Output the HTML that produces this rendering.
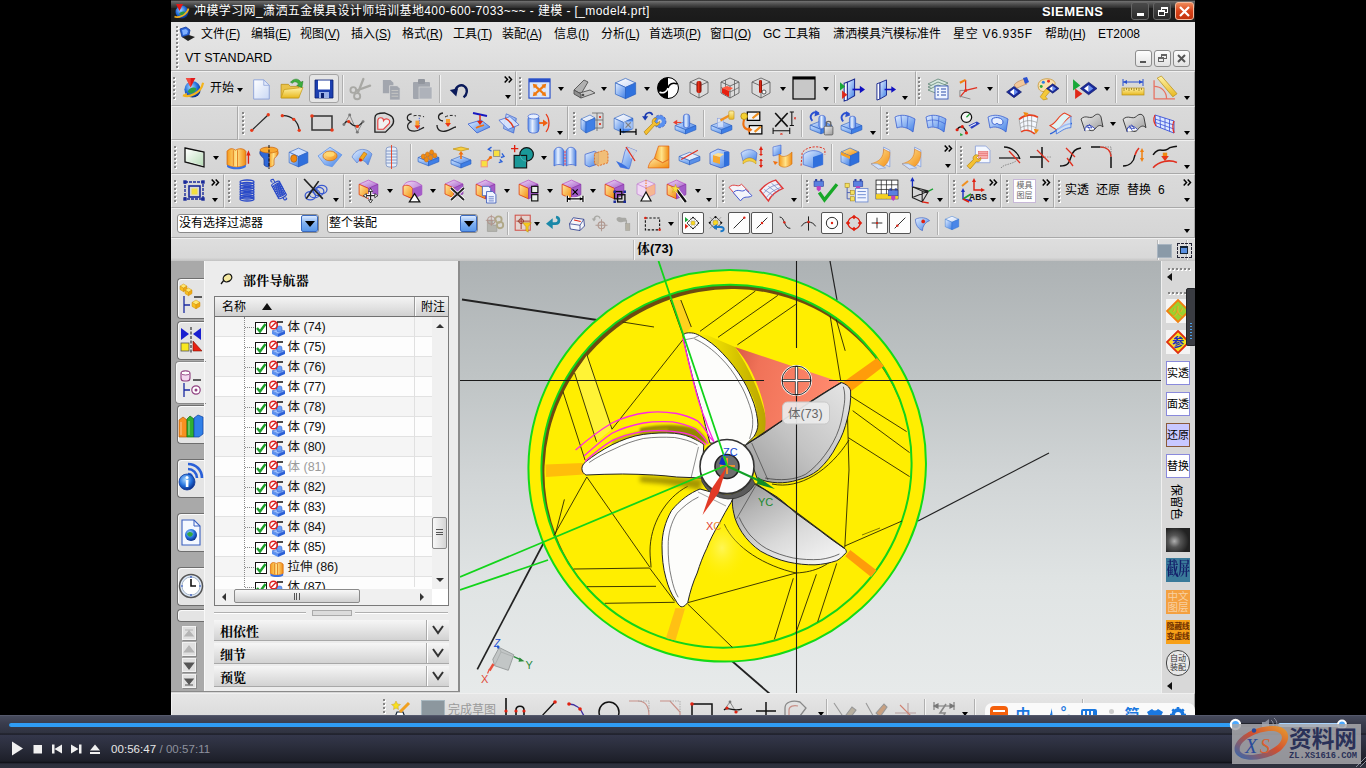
<!DOCTYPE html>
<html lang="zh"><head><meta charset="utf-8"><title>NX</title>
<style>
*{box-sizing:border-box;margin:0;padding:0}
html,body{width:1366px;height:768px;overflow:hidden;background:#000}
body{position:relative;font-family:"Liberation Sans","Noto Sans CJK SC",sans-serif;font-size:13px;color:#000}
.abs{position:absolute}
#win{position:absolute;left:171px;top:0;width:1024px;height:716px;background:#d7d7d7;overflow:hidden}
#title{position:absolute;left:0;top:0;width:1024px;height:22px;background:linear-gradient(#1c1c1c 0,#6c6c6c 1.500px,#505050 4px,#303030 7.500px,#1e1e1e 8.500px,#1a1a1a 100%);color:#fff;font-size:14px;line-height:23px;white-space:nowrap}
#menu{position:absolute;left:0;top:22px;width:1024px;height:49px;background:linear-gradient(#e6e6e6,#e2e2e2 50%,#dcdcdc);border-bottom:1px solid #ababab;font-size:13px}
.tb{position:absolute;background:#d8d8d8;border-top:1px solid #f0f0f0;border-left:1px solid #f0f0f0;border-bottom:1px solid #a9a9a9;border-right:1px solid #a9a9a9}
svg{position:absolute;overflow:visible}
.wb{top:2px;width:18px;height:18px;border:1px solid #666;border-radius:3px;background:linear-gradient(#4a4a4a,#2a2a2a)}
#title span{font-size:12px}
.mi{position:absolute;top:4px;white-space:nowrap;font-size:12px;line-height:16px;color:#000}
.mi u{text-decoration:underline;text-underline-offset:1px}
.cb{position:absolute;top:28px;width:17px;height:17px;border:1px solid #8c8c8c;border-radius:3px;background:linear-gradient(#fdfdfd,#e2e2e2)}
.grip{position:absolute;width:3px}
.grip:before{content:"";position:absolute;left:1px;top:1px;width:2px;height:100%;background:repeating-linear-gradient(#fff 0 2px,rgba(0,0,0,0) 2px 4px)}
.grip:after{content:"";position:absolute;left:0;top:0;width:2px;height:100%;background:repeating-linear-gradient(#858585 0 2px,rgba(0,0,0,0) 2px 4px)}
.tb{background:linear-gradient(#dadada,#d5d5d5)}
.dd{position:absolute;width:0;height:0;border-left:3.5px solid transparent;border-right:3.5px solid transparent;border-top:4px solid #000}
.sep{position:absolute;width:2px;border-left:1px solid #b0b0b0;border-right:1px solid #f4f4f4}
.more{position:absolute;font-size:13px;font-weight:bold;line-height:12px;color:#000}
.tbt{position:absolute;font-size:12px;line-height:18px;white-space:nowrap}
.pressed{position:absolute;border:1px solid #a4a4a4;border-radius:3px;background:#e5e5e5}
.mjtc{position:absolute;width:23px;height:24px;background:#fff;border:1px solid #c8b8d8;font-size:8px;line-height:10px;color:#666;text-align:center;padding-top:1px}
.mjtc span{display:block}
.combo{position:absolute;height:19px;border:1px solid #8a8a8a;border-radius:3px;background:#fff;font-size:12px;line-height:17px;overflow:hidden;white-space:nowrap}
.combo span{position:absolute;left:1px;top:0}
.combo b{position:absolute;right:0;top:0;width:17px;height:17px;background:linear-gradient(#dceaff,#7fb0f0 50%,#5a98ea);border:1px solid #3a6ac0;border-radius:2px}
.combo b i{position:absolute;left:2.5px;top:5px;border-left:5px solid transparent;border-right:5px solid transparent;border-top:6px solid #000}
.fr{position:absolute;border:1px solid #555;border-radius:2px;background:#fdfdfd}
#status{position:absolute;left:0;top:238px;width:1024px;height:23px;background:linear-gradient(#dedede,#d8d8d8 85%,#c2c2c2);border-top:1px solid #f0f0f0;font-size:13px;font-weight:bold;font-family:"Liberation Sans","Noto Serif CJK SC",serif}
#status span{position:absolute;top:0;line-height:19px}
.sdiv{position:absolute;top:1px;height:20px;width:2px;border-left:1px solid #b8b8b8;border-right:1px solid #f4f4f4}
.sicon1{position:absolute;left:986px;top:5px;width:15px;height:14px;background:#8a9aa8;border:1px solid #a8b4c0}
.sicon2{position:absolute;left:1006px;top:4px;width:15px;height:15px;border:1.5px dashed #223}
.sicon2 i{position:absolute;left:2px;top:2px;width:8px;height:8px;background:#5a90e0;border:1px solid #123;border-top-width:2px}
#panel{position:absolute;left:0;top:261px;width:289px;height:431px;background:#ececec;border-right:2px solid #8c8c8c;border-bottom:1px solid #8a8a8a;overflow:hidden}
#tabs{position:absolute;left:0;top:0;width:33px;height:432px;background:#a9a9a9}
.tab{position:absolute;left:6px;width:28px;background:#e4e4e4;border:1px solid #6e6e6e;border-right:none;border-radius:4px 0 0 4px;box-shadow:inset 1px 1px 0 #fafafa}
.tab.act{left:4px;width:31px;background:#ececec;border-color:#8a8a8a}
.nb{position:absolute;left:11px;width:14px;height:14px;background:#e0e0e0;border:1px solid #f2f2f2;box-shadow:1px 1px 0 #8a8a8a}
#pbody{position:absolute;left:33px;top:0;width:254px;height:432px;border-left:1px solid #f8f8f8}
#ptitle{position:absolute;left:38px;top:11px;font-size:13px;font-weight:bold;line-height:18px;letter-spacing:.2px;font-family:"Liberation Sans","Noto Serif CJK SC",serif}
#tree{position:absolute;left:9px;top:35px;width:235px;height:310px;border:1px solid #7a7a7a;background:#fff;overflow:hidden}
#thead{position:absolute;left:0;top:0;width:233px;height:20px;background:linear-gradient(#f4f4f4,#e0e0e0 60%,#d0d0d0);border-bottom:1px solid #707070;font-size:12px;line-height:20px}
#thead span{position:absolute;top:0}
.up{position:absolute;left:47px;top:6px;border-left:5.5px solid transparent;border-right:5.5px solid transparent;border-bottom:7px solid #111}
.cdiv{position:absolute;left:199px;top:0;height:19px;width:2px;border-left:1px solid #9a9a9a;border-right:1px solid #fafafa}
.row{position:absolute;left:0;width:217px;height:20px;border-bottom:1px solid #e2e2e2;background:#fdfdfd;font-size:12.5px;line-height:19px}
.row.alt{background:#f5f5f5}
.row span{position:absolute;left:72.500px;top:1px;white-space:nowrap;color:#111}
.row.dim span{color:#9a9a9a}
.ck{position:absolute;left:39.500px;top:4.500px;width:12px;height:12px;border:1.3px solid #111;background:#fff}
.dots{position:absolute;left:30px;top:10px;width:9px;border-top:1px dotted #888}
.vdots{position:absolute;left:29px;top:20px;height:270px;border-left:1px dotted #888}
.cdiv2{position:absolute;left:199px;top:20px;height:270px;border-left:1px solid #e0e0e0}
#vsb{position:absolute;left:217px;top:20px;width:16px;height:272px;background:#f0f0f0}
#hsb{position:absolute;left:0;top:292px;width:217px;height:16px;background:#f0f0f0}
.sa{position:absolute;left:4px;width:0;height:0;border-left:4px solid transparent;border-right:4px solid transparent}
.sh{position:absolute;top:4px;width:0;height:0;border-top:4px solid transparent;border-bottom:4px solid transparent}
.thumb{position:absolute;border:1px solid #8a8a8a;border-radius:2px;background:linear-gradient(90deg,#f8f8f8,#d4d4d4)}
#hsb .thumb{background:linear-gradient(#f8f8f8,#d0d0d0)}
.gr{position:absolute;left:3px;top:11px;width:7px;height:7px;background:repeating-linear-gradient(#555 0 1px,transparent 1px 2.500px)}
.gr2{position:absolute;left:59px;top:3px;width:7px;height:7px;background:repeating-linear-gradient(90deg,#555 0 1px,transparent 1px 2.500px)}
#split{position:absolute;left:9px;top:349px;width:235px;height:6px}
#split i{position:absolute;top:2px;height:2px;border-top:1px solid #b0b0b0;border-bottom:1px solid #fff}
#split b{position:absolute;left:98px;top:0;width:40px;height:6px;border:1px solid #aaa;background:#dcdcdc}
.sec{font-family:"Liberation Sans","Noto Serif CJK SC",serif;position:absolute;left:9px;width:235px;height:21px;background:linear-gradient(#f6f6f6,#e4e4e4 50%,#d2d2d2);border-bottom:1px solid #a8a8a8;font-size:13px;font-weight:bold;line-height:21px}
.sec span{position:absolute;left:6px;top:1px}
.sec b{position:absolute;right:0;top:0;width:23px;height:20px;border-left:1px solid #aaa;box-shadow:inset 1px 0 0 #fff}
#vp{position:absolute;left:289px;top:261px;width:701px;height:432px;background:linear-gradient(#adb2b4 0,#bfc4c5 27%,#d1d5d6 50%,#e0e4e4 75%,#e7eaea 100%);overflow:hidden}
#rbar{position:absolute;left:990px;top:261px;width:34px;height:432px;background:#d8d8d8;border-left:1px solid #f0f0f0}
.hgrip{position:absolute;left:6px;width:23px;height:3px}
.hgrip:before{content:"";position:absolute;left:1px;top:1px;height:2px;width:100%;background:repeating-linear-gradient(90deg,#fff 0 2px,rgba(0,0,0,0) 2px 4px)}
.hgrip:after{content:"";position:absolute;left:0;top:0;height:2px;width:100%;background:repeating-linear-gradient(90deg,#858585 0 2px,rgba(0,0,0,0) 2px 4px)}
.la{position:absolute;left:5px;width:0;height:0;border-top:4px solid transparent;border-bottom:4px solid transparent;border-right:5px solid #111}
.rb{position:absolute;left:4px;width:24px;height:24px;border:1px solid #8a8adc;background:#fff;font-size:11px;line-height:22px;white-space:nowrap;overflow:hidden;text-align:center}
.rb span{position:absolute;left:0;top:0;width:100%;text-align:center}
.vtxt{position:absolute;left:-5px;top:234px;width:38px;height:14px;font-size:12px;line-height:14px;transform:rotate(90deg);transform-origin:50% 50%;text-align:center;white-space:nowrap}
#volw{position:absolute;left:24px;top:27px;width:10px;height:58px;background:#3a3c42;border:1px solid #24262a;border-radius:2px}
#volw i{position:absolute;left:3px;top:34px;width:2px;height:18px;background:repeating-linear-gradient(#4aa0f0 0 1.500px,transparent 1.500px 3px)}
#bbar{position:absolute;left:0;top:693px;width:1024px;height:23px;overflow:hidden;background:#e0e0e0}
#bbar .tb{background:linear-gradient(#e6e6e6,#dcdcdc)}
#ime{position:absolute;left:813.500px;top:6.500px;width:210px;height:24px;background:#fafafa;border-radius:7px;overflow:hidden}
#player{position:absolute;left:0;top:715px;width:1366px;height:53px;background:linear-gradient(#5c6074 0,#464a5c 1.500px,#3a3d4e 8px,#2f3240 18px,#191a22 19px,#33364a 20.500px,#2c2f3e 30px,#1d1f29 46px,#12131a 47.500px,#2c2f3c 49px,#30333f 53px)}
#ptrack{position:absolute;left:9px;top:7.500px;width:1340px;height:4px;border-radius:2px;background:#20222c}
#pfill{position:absolute;left:0;top:0;width:1226px;height:4px;border-radius:2px;background:#2f9cf4}
#vfill{position:absolute;left:1269px;top:0;width:64px;height:4px;border-radius:2px;background:#a8d4ff}
#ptime{position:absolute;left:111px;top:27px;font-size:11.500px;line-height:14px;color:#e6e6e6;letter-spacing:.05px;white-space:nowrap}
#ptime i{font-style:normal;color:#8e929e}
#wm{position:absolute;left:1232px;top:9px;width:129px;height:40px;background:rgba(168,168,172,.86)}

</style></head>
<body>
<!-- titlebar -->
<div id="win">
<div id="title">
  <svg style="left:2px;top:2px" width="17" height="18" viewBox="0 0 17 18">
    <defs><radialGradient id="gl" cx="40%" cy="35%" r="65%"><stop offset="0" stop-color="#9fd0ff"/><stop offset=".6" stop-color="#1f6ad8"/><stop offset="1" stop-color="#0b2f8a"/></radialGradient></defs>
    <circle cx="9" cy="10" r="6.5" fill="url(#gl)"/>
    <path d="M1.5 14.5 C5 16.5 14 13 15.5 6.5" fill="none" stroke="#f0b020" stroke-width="1.8"/>
    <path d="M3 2 L10 2 L6.5 9 Z" fill="#e01818"/>
    <path d="M6 12 C7 10 10 9 12 10 C11 13 8 14 6 12Z" fill="#2c9a3a"/>
  </svg>
  <span class="abs" style="left:23px;top:0;letter-spacing:.4px">冲模学习网_潇洒五金模具设计师培训基地400-600-7033~~~ - 建模 - [_model4.prt]</span>
  <span class="abs" style="left:871px;top:0;font-weight:bold;font-size:13px;letter-spacing:.4px;line-height:23px">SIEMENS</span>
  <div class="abs wb" style="left:960px"><i style="position:absolute;left:5px;top:10px;width:7px;height:3px;background:#fff"></i></div>
  <div class="abs wb" style="left:982px"><i style="position:absolute;left:7px;top:4px;width:7px;height:6px;border:1.5px solid #fff;border-top-width:2px"></i><i style="position:absolute;left:4px;top:7px;width:7px;height:6px;border:1.5px solid #fff;border-top-width:2px;background:#333"></i></div>
  <div class="abs wb" style="left:1004px;width:19px;background:linear-gradient(#f08a5a,#d8431a 50%,#c2330e);border-color:#f5b99c">
    <svg style="left:3px;top:3px" width="11" height="11" viewBox="0 0 11 11"><path d="M1 1L10 10M10 1L1 10" stroke="#fff" stroke-width="2.2"/></svg></div>
</div>

<!-- menubar -->
<div id="menu">
  <div class="grip" style="left:5px;top:4px;height:42px"></div>
  <svg style="left:8px;top:4px" width="17" height="17" viewBox="0 0 17 17">
    <path d="M1 3 L7 1 L11 4 L10 9 L3 11 Z" fill="#2a63d6" stroke="#123a9a" stroke-width=".8"/>
    <path d="M3 11 L10 9 L16 11 L9 15 Z" fill="#222"/>
    <path d="M3 4 L7 3 L9 5 L8 8 L4 9Z" fill="#7fb0ff"/>
  </svg>
  <span class="mi" style="left:30px">文件(<u>F</u>)</span>
  <span class="mi" style="left:80px">编辑(<u>E</u>)</span>
  <span class="mi" style="left:129px">视图(<u>V</u>)</span>
  <span class="mi" style="left:180px">插入(<u>S</u>)</span>
  <span class="mi" style="left:231px">格式(<u>R</u>)</span>
  <span class="mi" style="left:282px">工具(<u>T</u>)</span>
  <span class="mi" style="left:331px">装配(<u>A</u>)</span>
  <span class="mi" style="left:383px">信息(<u>I</u>)</span>
  <span class="mi" style="left:430px">分析(<u>L</u>)</span>
  <span class="mi" style="left:478px">首选项(<u>P</u>)</span>
  <span class="mi" style="left:539px">窗口(<u>O</u>)</span>
  <span class="mi" style="left:592px">GC 工具箱</span>
  <span class="mi" style="left:662px">潇洒模具汽模标准件</span>
  <span class="mi" style="left:782px;letter-spacing:.7px">星空 V6.935F</span>
  <span class="mi" style="left:874px">帮助(<u>H</u>)</span>
  <span class="mi" style="left:927px">ET2008</span>
  <span class="mi" style="left:14px;top:28px;font-size:12.500px">VT STANDARD</span>
  <div class="cb" style="left:964px"><i style="position:absolute;left:4px;top:10px;width:6px;height:2px;background:#555"></i></div>
  <div class="cb" style="left:983px"><i style="position:absolute;left:6px;top:3px;width:6px;height:5px;border:1px solid #666;border-top-width:2px"></i><i style="position:absolute;left:3px;top:6px;width:6px;height:5px;border:1px solid #666;border-top-width:2px;background:#eee"></i></div>
  <div class="cb" style="left:1002px"><svg style="left:3px;top:3px" width="9" height="9" viewBox="0 0 9 9"><path d="M1 1L8 8M8 1L1 8" stroke="#555" stroke-width="2"/></svg></div>
</div>

<!-- toolbars -->
<svg width="0" height="0" style="position:absolute"><defs>
<linearGradient id="gB" x1="0" y1="0" x2="1" y2="1"><stop offset="0" stop-color="#e4efff"/><stop offset="1" stop-color="#3f7fe6"/></linearGradient>
<linearGradient id="gB2" x1="0" y1="0" x2="0" y2="1"><stop offset="0" stop-color="#cfe3ff"/><stop offset="1" stop-color="#5b93ea"/></linearGradient>
<linearGradient id="gO" x1="0" y1="0" x2="1" y2="1"><stop offset="0" stop-color="#ffe9a0"/><stop offset="1" stop-color="#f28a0c"/></linearGradient>
<linearGradient id="gO2" x1="0" y1="0" x2="1" y2="0"><stop offset="0" stop-color="#f59a1a"/><stop offset=".5" stop-color="#ffe38a"/><stop offset="1" stop-color="#f08a10"/></linearGradient>
<linearGradient id="gP" x1="0" y1="0" x2="1" y2="1"><stop offset="0" stop-color="#f3dcf7"/><stop offset="1" stop-color="#a25cc8"/></linearGradient>
<linearGradient id="gY" x1="0" y1="0" x2="0" y2="1"><stop offset="0" stop-color="#fff3a8"/><stop offset="1" stop-color="#e8b820"/></linearGradient>
<linearGradient id="gG" x1="0" y1="0" x2="1" y2="1"><stop offset="0" stop-color="#f2f2f2"/><stop offset="1" stop-color="#9a9a9a"/></linearGradient>
<linearGradient id="gW" x1="0" y1="0" x2="1" y2="1"><stop offset="0" stop-color="#ffffff"/><stop offset="1" stop-color="#c9d8f5"/></linearGradient>
<radialGradient id="gGl" cx="40%" cy="35%" r="65%"><stop offset="0" stop-color="#a8d8ff"/><stop offset=".6" stop-color="#2370dc"/><stop offset="1" stop-color="#0b2f8a"/></radialGradient>
<linearGradient id="gCy" x1="0" y1="0" x2="1" y2="0"><stop offset="0" stop-color="#5a8fe8"/><stop offset=".4" stop-color="#e8f1ff"/><stop offset="1" stop-color="#4a80df"/></linearGradient>
<linearGradient id="gGr" x1="0" y1="0" x2="1" y2="1"><stop offset="0" stop-color="#ffffff"/><stop offset="1" stop-color="#b8dcb8"/></linearGradient>
<linearGradient id="gR" x1="0" y1="0" x2="1" y2="0"><stop offset="0" stop-color="#8a0a00"/><stop offset=".4" stop-color="#e83018"/><stop offset="1" stop-color="#7a0800"/></linearGradient>
</defs></svg>
<div class="tb" style="left:0px;top:71px;width:345px;height:35px"></div>
<div class="tb" style="left:345px;top:71px;width:400px;height:35px"></div>
<div class="tb" style="left:745px;top:71px;width:279px;height:35px"></div>
<i class="grip" style="left:1.5px;top:77px;height:24px"></i>
<svg style="left:11.0px;top:76.5px" width="23.0" height="23.0" viewBox="0 0 24 24"><circle cx="11" cy="13" r="8.5" fill="url(#gGl)"/><path d="M6 15C8 11 12 10 15 12C14 17 9 19 6 15Z" fill="#2fa040"/><path d="M1 19C7 22 20 17 22 6" fill="none" stroke="#f4b41c" stroke-width="2.2"/><path d="M1 19l4 -2.5l0 4z" fill="#f4b41c"/><path d="M4 1L14 1L9 11Z" fill="#e21a1a"/><path d="M4 1L9 1L9 11Z" fill="#ff6a5a" opacity=".6"/></svg>
<span class="tbt" style="left:39px;top:79px">开始</span>
<i class="dd" style="left:66.0px;top:87.5px"></i>
<svg style="left:79.0px;top:78.0px" width="22.0" height="22.0" viewBox="0 0 24 24"><path d="M4 2L15 2L21 8L21 23L4 23Z" fill="url(#gW)" stroke="#8aa0d8" stroke-width="1"/><path d="M15 2L15 8L21 8Z" fill="#dfe8fb" stroke="#8aa0d8" stroke-width=".8"/></svg>
<svg style="left:108.0px;top:75.5px" width="25.0" height="25.0" viewBox="0 0 24 24"><path d="M2 8L9 8L11 10L19 10L19 21L2 21Z" fill="#e9c24a" stroke="#b88a10" stroke-width=".7"/><path d="M5 13L23 11L19 21L2 21Z" fill="url(#gY)" stroke="#c49a18" stroke-width=".7"/><path d="M11 6C14 2 19 2 21 6L23 5L22 11L17 9L19 8C17 5 14 5 13 7Z" fill="#3cae3c" stroke="#1e7a1e" stroke-width=".5"/></svg>
<div class="pressed" style="left:138px;top:74px;width:30px;height:29px"></div>
<svg style="left:141.0px;top:77.0px" width="24.0" height="24.0" viewBox="0 0 24 24"><path d="M3 3L21 3L21 21L3 21Z" fill="#1c3fb0" stroke="#0a1f70" stroke-width=".8"/><rect x="6" y="3.5" width="12" height="9" fill="#fff"/><rect x="7" y="15" width="10" height="6" fill="#9ab0e8"/><rect x="9" y="16" width="3" height="5" fill="#0a1f70"/></svg>
<i class="sep" style="left:171.0px;top:75px;height:28px"></i>
<svg style="left:178.0px;top:77.5px" width="23.0" height="23.0" viewBox="0 0 24 24"><path d="M15 1L9.500 15M22 8L8 13" stroke="#a8a8a4" stroke-width="2.400" fill="none" stroke-linecap="round"/><circle cx="8.500" cy="19" r="3.200" fill="none" stroke="#a8a8a4" stroke-width="2"/><circle cx="4.500" cy="12.500" r="3" fill="none" stroke="#a8a8a4" stroke-width="2"/></svg>
<svg style="left:209.0px;top:77.5px" width="23.0" height="23.0" viewBox="0 0 24 24"><path d="M3 2L11 2L14 5L14 16L3 16Z" fill="#a2a6ae"/><path d="M10 8L18 8L21 11L21 23L10 23Z" fill="#a2a6ae" stroke="#dcdcdc" stroke-width=".8"/><path d="M12 13h7M12 16h7M12 19h7" stroke="#c8c8c4" stroke-width="1"/></svg>
<svg style="left:239.0px;top:77.0px" width="24.0" height="24.0" viewBox="0 0 24 24"><rect x="3" y="5" width="17" height="17" rx="1" fill="#a2a6ae"/><rect x="8" y="2" width="7" height="5" rx="1" fill="#92969e"/><rect x="9" y="10" width="13" height="12" fill="#aeb2ba" stroke="#dcdcdc" stroke-width=".6"/></svg>
<i class="sep" style="left:268.0px;top:75px;height:28px"></i>
<svg style="left:277.0px;top:79.0px" width="22.0" height="22.0" viewBox="0 0 24 24"><path d="M8 14C8 8 14 5 18 8C22 11 21 17 17 20" fill="none" stroke="#0a1a5a" stroke-width="2.6"/><path d="M2 12L11 10L9 19Z" fill="#0a1a5a"/></svg>
<svg style="left:332.5px;top:76px" width="9" height="7" viewBox="0 0 9 7"><path d="M.7 .5L3.500 3.500L.7 6.500M4.700 .5L7.500 3.500L4.700 6.500" fill="none" stroke="#000" stroke-width="1.500"/></svg>
<i class="dd" style="left:334.0px;top:94.5px"></i>
<i class="grip" style="left:347.5px;top:77px;height:24px"></i>
<svg style="left:357.0px;top:76.5px" width="23.0" height="23.0" viewBox="0 0 24 24"><rect x="1" y="2" width="22" height="20" fill="#dbe7fb" stroke="#2a50c8" stroke-width="1.2"/><rect x="1" y="2" width="22" height="3.5" fill="#2a50c8"/><path d="M7 9L17 18M17 9L7 18" stroke="#f07a10" stroke-width="2.4"/><path d="M5 7l5 1l-4 4zM19 7l-5 1l4 4zM5 20l5 -1l-4 -4zM19 20l-5 -1l4 -4z" fill="#f07a10"/></svg>
<i class="dd" style="left:387.0px;top:86.5px"></i>
<svg style="left:401.0px;top:76.0px" width="24.0" height="24.0" viewBox="0 0 24 24"><path d="M2 14L12 4L16 6L9 18Z" fill="#b0b0b0" stroke="#505050" stroke-width=".9"/><path d="M4 18L18 14L23 17L9 22Z" fill="#c8c8c8" stroke="#505050" stroke-width=".9"/><path d="M2 14L9 18L9 22L2 18Z" fill="#909090" stroke="#505050" stroke-width=".9"/><circle cx="11" cy="19" r="1.3" fill="#505050"/></svg>
<i class="dd" style="left:430.0px;top:86.5px"></i>
<svg style="left:441.0px;top:74.5px" width="27.0" height="27.0" viewBox="0 0 24 24"><path d="M12 3L21 7L12 11L3 7Z" fill="url(#gW)" stroke="#2a5fc0" stroke-width="0.6"/><path d="M3 7L12 11L12 21L3 17Z" fill="url(#gB)" stroke="#2a5fc0" stroke-width="0.6"/><path d="M12 11L21 7L21 17L12 21Z" fill="#2f72de" stroke="#2a5fc0" stroke-width="0.6"/></svg>
<i class="dd" style="left:473.0px;top:86.5px"></i>
<svg style="left:485.0px;top:76.0px" width="24.0" height="24.0" viewBox="0 0 24 24"><circle cx="12" cy="12" r="10.500" fill="#000"/><path d="M12 1.500A10.500 10.500 0 0 1 12 22.500Z" fill="#fff"/><path d="M3.500 16C7 18 11 16 12 12" fill="none" stroke="#fff" stroke-width="1.500"/><path d="M12 12C13 8 17 6 21 8" fill="none" stroke="#000" stroke-width="1.500"/><circle cx="12" cy="12" r="10.500" fill="none" stroke="#000" stroke-width="1"/></svg>
<svg style="left:516.0px;top:76.0px" width="24.0" height="24.0" viewBox="0 0 24 24"><path d="M12 2L21 6L21 17L12 22L3 17L3 6ZM3 6L12 10L21 6M12 10L12 22" fill="#e0e0e0" fill-opacity=".5" stroke="#555" stroke-width=".8"/><rect x="9.5" y="5" width="5" height="12" rx="2" fill="url(#gR)"/></svg>
<svg style="left:547.0px;top:76.0px" width="24.0" height="24.0" viewBox="0 0 24 24"><path d="M12 2L21 6L21 17L12 22L3 17L3 6ZM3 6L12 10L21 6M12 10L12 22" fill="#e0e0e0" fill-opacity=".5" stroke="#555" stroke-width=".8"/><path d="M3 11.5L12 16L21 11.5M7.5 4L7.5 19.5M16.5 4L16.5 19.5" stroke="#555" stroke-width=".7" fill="none"/><path d="M4 12L11 15L11 21L4 17Z" fill="#e82010"/><path d="M4 12L9 10L15 12L11 15Z" fill="#ff5a40"/></svg>
<svg style="left:578.0px;top:76.0px" width="24.0" height="24.0" viewBox="0 0 24 24"><path d="M12 2L21 6L21 17L12 22L3 17L3 6ZM3 6L12 10L21 6M12 10L12 22" fill="#e0e0e0" fill-opacity=".5" stroke="#555" stroke-width=".8"/><rect x="10" y="4" width="3" height="13" rx="1.2" fill="url(#gR)"/><circle cx="15" cy="16" r="2" fill="#fff" stroke="#333" stroke-width=".8"/></svg>
<i class="dd" style="left:609.0px;top:86.5px"></i>
<svg style="left:621.0px;top:76.0px" width="24.0" height="24.0" viewBox="0 0 24 24"><rect x="1" y="1" width="22" height="22" fill="#c8c8c8" stroke="#000" stroke-width="1.2"/><rect x="1" y="1" width="22" height="2.5" fill="#000"/></svg>
<i class="dd" style="left:652.0px;top:86.5px"></i>
<i class="sep" style="left:663.0px;top:75px;height:28px"></i>
<svg style="left:669.0px;top:76.5px" width="25.0" height="25.0" viewBox="0 0 24 24"><path d="M7 5L14 2L14 18L7 22Z" fill="url(#gB)" stroke="#1a2a90" stroke-width="1"/><path d="M4 6L7 5L7 22L4 23Z" fill="#fff" stroke="#1a2a90" stroke-width="1"/><path d="M12 12L20 12" stroke="#1010c0" stroke-width="1.6"/><path d="M19 8.5L24 12L19 15.5Z" fill="#1010c0"/><path d="M0 5L5 9L0 13Z" fill="#18a838"/><path d="M2 13L7 17L2 21Z" fill="#e02818"/></svg>
<svg style="left:704.0px;top:77.5px" width="23.0" height="23.0" viewBox="0 0 24 24"><path d="M5 5L12 2L12 18L5 22Z" fill="url(#gB)" stroke="#1a2a90" stroke-width="1"/><path d="M2 6L5 5L5 22L2 23Z" fill="#fff" stroke="#1a2a90" stroke-width="1"/><path d="M10 12L18 12" stroke="#1010c0" stroke-width="1.6"/><path d="M17 8.5L22 12L17 15.5Z" fill="#1010c0"/></svg>
<i class="dd" style="left:731.0px;top:95.5px"></i>
<i class="grip" style="left:746.5px;top:77px;height:24px"></i>
<svg style="left:755.0px;top:76.0px" width="24.0" height="24.0" viewBox="0 0 24 24"><path d="M2 8L12 3L22 7L12 12Z" fill="#d8e8e0" stroke="#507868" stroke-width=".7"/><path d="M2 11L12 6L22 10L12 15Z" fill="#d8e8e0" stroke="#507868" stroke-width=".7"/><path d="M2 14L12 9L22 13L12 18Z" fill="#d8e8e0" stroke="#507868" stroke-width=".7"/><rect x="9" y="10" width="13" height="13" fill="#eef4ff" stroke="#3a5ab8" stroke-width=".9"/><path d="M11 13h2M15 13h5M11 16h2M15 16h5M11 19h2M15 19h5" stroke="#2a4aa8" stroke-width="1.2"/></svg>
<svg style="left:786.0px;top:76.5px" width="23.0" height="23.0" viewBox="0 0 24 24"><path d="M9 14L9 3M9 14L21 11M9 14L3 21" stroke="#e03020" stroke-width="1.3" fill="none"/><path d="M9 14L3 14L3 20M3 20L14 23" stroke="#888" stroke-width="1" fill="none"/><path d="M3 6L9 3" stroke="#f08010" stroke-width="2.2"/><circle cx="9" cy="14" r="1.6" fill="#e03020"/></svg>
<i class="dd" style="left:816.0px;top:86.5px"></i>
<i class="sep" style="left:826.0px;top:75px;height:28px"></i>
<svg style="left:834.0px;top:76.0px" width="24.0" height="24.0" viewBox="0 0 24 24"><path d="M1.5 16L9 10.375L16.5 16L9 21.625Z" fill="#1a2a9a" stroke="#0a1460" stroke-width=".6"/><path d="M4.875 16L9 12.85L9 19.15Z" fill="#fff"/><path d="M13.125 16L9 12.85L9 19.15Z" fill="#6a90f0"/><path d="M9 9C12 5 17 4 20 3L22 8C18 9 15 11 12 12Z" fill="#f2c89a" stroke="#b88050" stroke-width=".6"/><path d="M18 2L22 1L24 6L20 8Z" fill="#2a50d0"/></svg>
<svg style="left:864.0px;top:75.5px" width="25.0" height="25.0" viewBox="0 0 24 24"><path d="M3 9C3 3 12 1 17 4C22 7 18 11 14 11C11 11 12 15 9 15C5 15 3 13 3 9Z" fill="#f8e0b0" stroke="#c89838" stroke-width=".8"/><circle cx="8" cy="6" r="1.5" fill="#2a80e8"/><circle cx="13" cy="5" r="1.4" fill="#e83020"/><circle cx="6" cy="10" r="1.4" fill="#30a838"/><path d="M10 13L14 11L15 14L10 20L12 22L8 23L5 20Z" fill="#f4c838" stroke="#b88a10" stroke-width=".6"/><path d="M11 12L17 7.5L23 12L17 16.5Z" fill="#1a2a9a" stroke="#0a1460" stroke-width=".6"/><path d="M13.7 12L17 9.48L17 14.52Z" fill="#fff"/><path d="M20.3 12L17 9.48L17 14.52Z" fill="#6a90f0"/></svg>
<i class="sep" style="left:895.0px;top:75px;height:28px"></i>
<svg style="left:901.0px;top:75.5px" width="25.0" height="25.0" viewBox="0 0 24 24"><path d="M1 3L8 9L1 14Z" fill="#18a838"/><path d="M3 12L10 17L3 22Z" fill="#e02818"/><path d="M8 12L16 6.0L24 12L16 18.0Z" fill="#1a2a9a" stroke="#0a1460" stroke-width=".6"/><path d="M11.6 12L16 8.64L16 15.36Z" fill="#fff"/><path d="M20.4 12L16 8.64L16 15.36Z" fill="#6a90f0"/></svg>
<i class="dd" style="left:933.0px;top:86.5px"></i>
<i class="sep" style="left:944.0px;top:75px;height:28px"></i>
<svg style="left:950.0px;top:76.0px" width="24.0" height="24.0" viewBox="0 0 24 24"><rect x="1" y="12" width="22" height="7" fill="url(#gY)" stroke="#b89018" stroke-width=".7"/><path d="M3 12v3M5.5 12v2M8 12v3M10.5 12v2M13 12v3M15.5 12v2M18 12v3M20.5 12v2" stroke="#8a6a08" stroke-width=".7"/><path d="M2 6H22M2 3V10M22 3V10" stroke="#2a50d0" stroke-width="1"/><path d="M2 6l4 -2v4zM22 6l-4 -2v4z" fill="#2a50d0"/></svg>
<svg style="left:981.0px;top:75.5px" width="25.0" height="25.0" viewBox="0 0 24 24"><path d="M2 4L2 22L22 22" fill="none" stroke="#e87060" stroke-width="1.2"/><path d="M2 10C9 10 14 15 14 22" fill="none" stroke="#e87060" stroke-width="1.2"/><path d="M5 2L9 0L24 17L20 20Z" fill="url(#gY)" stroke="#b89018" stroke-width=".7"/></svg>
<i class="dd" style="left:1013.0px;top:95.5px"></i>
<div class="tb" style="left:0px;top:106px;width:67px;height:34px"></div>
<div class="tb" style="left:67px;top:106px;width:330px;height:34px"></div>
<div class="tb" style="left:397px;top:106px;width:313px;height:34px"></div>
<div class="tb" style="left:710px;top:106px;width:314px;height:34px"></div>
<i class="grip" style="left:70.5px;top:112px;height:23px"></i>
<svg style="left:78.0px;top:112.0px" width="22.0" height="22.0" viewBox="0 0 24 24"><path d="M3 20L21 3" stroke="#222" stroke-width="1.3"/><circle cx="3" cy="20" r="1.8" fill="#e83818"/><circle cx="21" cy="3" r="1.8" fill="#e83818"/></svg>
<svg style="left:109.0px;top:112.0px" width="22.0" height="22.0" viewBox="0 0 24 24"><path d="M2 4C12 3 20 10 21 20" fill="none" stroke="#222" stroke-width="1.3"/><circle cx="2.5" cy="4" r="1.8" fill="#e83818"/><circle cx="15" cy="8" r="1.8" fill="#e83818"/><circle cx="21" cy="20" r="1.8" fill="#e83818"/></svg>
<svg style="left:139.0px;top:111.0px" width="24.0" height="24.0" viewBox="0 0 24 24"><rect x="2" y="5" width="20" height="14" fill="none" stroke="#333" stroke-width="1.5"/><circle cx="2" cy="5" r="1.8" fill="#e83818"/><circle cx="22" cy="19" r="1.8" fill="#e83818"/></svg>
<svg style="left:171.0px;top:111.5px" width="23.0" height="23.0" viewBox="0 0 24 24"><path d="M2 13L8 3L16 21L22 10" fill="none" stroke="#888" stroke-width="1"/><path d="M2 13C6 6 8 12 12 14C17 16 18 14 22 10" fill="none" stroke="#222" stroke-width="1.3"/><circle cx="7" cy="10" r="1.7" fill="#e83818"/><circle cx="16" cy="15" r="1.7" fill="#e83818"/><circle cx="2" cy="13" r="1.5" fill="#777"/><circle cx="22" cy="10" r="1.5" fill="#777"/><circle cx="8" cy="3" r="1.5" fill="#777"/><circle cx="16" cy="21" r="1.5" fill="#777"/></svg>
<svg style="left:202.0px;top:111.5px" width="23.0" height="23.0" viewBox="0 0 24 24"><path d="M2 21L2 6C2 2 6 1 12 1L17 3C22 5 23 11 19 15L13 21Z" fill="none" stroke="#222" stroke-width="1.4"/><path d="M5 18L5 9C5 5 11 5 11 9C13 6 19 7 17 12L11 18Z" fill="#f0f0f0" stroke="#e84040" stroke-width="1.2"/></svg>
<svg style="left:232.0px;top:111.5px" width="23.0" height="23.0" viewBox="0 0 24 24"><path d="M9 2C3 3 3 9 9 10C3 12 3 20 12 20C17 20 19 17 22 16" fill="none" stroke="#222" stroke-width="1.3"/><path d="M11 4C15 3 18 4 22 5" stroke="#222" stroke-width="1" stroke-dasharray="3 2" fill="none"/><path d="M17 6V19" stroke="#3050e0" stroke-width=".9" stroke-dasharray="1.5 1"/><path d="M13 9h4v6h-4z" fill="#f8a030"/><path d="M12 14l3 4l3 -4z" fill="#e83818"/></svg>
<svg style="left:263.0px;top:111.0px" width="24.0" height="24.0" viewBox="0 0 24 24"><path d="M9 2C3 3 3 9 9 10M3 14C3 20 8 21 12 20C17 19 19 16 22 16" fill="none" stroke="#222" stroke-width="1.3"/><path d="M11 6C15 4 18 4 22 5" stroke="#222" stroke-width="1" stroke-dasharray="3 2" fill="none"/><path d="M12 8h4v5h-4z" fill="#f8a030"/><path d="M11 12l3 4l3 -4z" fill="#e83818"/></svg>
<svg style="left:296.0px;top:111.0px" width="24.0" height="24.0" viewBox="0 0 24 24"><path d="M1 13L14 9L23 16L10 22Z" fill="url(#gB)" stroke="#3a5fd0" stroke-width=".8"/><path d="M6 2L20 5" stroke="#1818c0" stroke-width="1.8"/><path d="M13 4V11" stroke="#e02010" stroke-width="1.4"/><path d="M10 10l3 4l3 -4z" fill="#e02010"/><path d="M9 17C12 15 15 15 17 14" stroke="#f07010" stroke-width="1.6" fill="none"/></svg>
<svg style="left:327.0px;top:112.0px" width="22.0" height="22.0" viewBox="0 0 24 24"><path d="M9 2L20 7L17 23L6 18Z" fill="url(#gB)" fill-opacity=".8" stroke="#3a5fd0" stroke-width=".8"/><path d="M1 9L13 5L23 14L11 19Z" fill="#dce8ff" fill-opacity=".85" stroke="#3a5fd0" stroke-width=".8"/><path d="M8 7C12 9 15 12 17 17" stroke="#e03818" stroke-width="1.6" fill="none"/></svg>
<svg style="left:355.0px;top:111.0px" width="24.0" height="24.0" viewBox="0 0 24 24"><rect x="2" y="4" width="11" height="18" rx="4" fill="url(#gCy)" stroke="#3a5fd0" stroke-width=".7"/><ellipse cx="7.5" cy="5.5" rx="5.5" ry="2.5" fill="#e8f0ff" stroke="#3a5fd0" stroke-width=".7"/><path d="M13 12H19" stroke="#f06010" stroke-width="1.8"/><path d="M17 8.5L22 12L17 15.5Z" fill="#f06010"/><path d="M20 3C24 8 24 16 20 21" fill="none" stroke="#e83818" stroke-width="1.2"/></svg>
<i class="dd" style="left:386.0px;top:130.5px"></i>
<i class="grip" style="left:401.5px;top:112px;height:23px"></i>
<svg style="left:409.0px;top:111.0px" width="24.0" height="24.0" viewBox="0 0 24 24"><path d="M12 2L23 2M12 9L23 9M12 17L23 17M23 2V17M17 2V20" stroke="#666" stroke-width=".8"/><path d="M1 8L10 4L15 7L6 11Z" fill="url(#gW)" stroke="#2a5fc0" stroke-width=".6"/><path d="M1 8L6 11L6 22L1 18Z" fill="url(#gB)" stroke="#2a5fc0" stroke-width=".6"/><path d="M6 11L15 7L15 18L6 22Z" fill="#3f7fe6" stroke="#2a5fc0" stroke-width=".6"/><path d="M19 5l2 2m0 -2l-2 2M19 12l2 2m0 -2l-2 2" stroke="#e02010" stroke-width=".8"/></svg>
<svg style="left:440.0px;top:110.5px" width="25.0" height="25.0" viewBox="0 0 24 24"><path d="M12 3L21 7L12 11L3 7Z" fill="url(#gW)" stroke="#2a5fc0" stroke-width="0.6"/><path d="M3 7L12 11L12 21L3 17Z" fill="url(#gB)" stroke="#2a5fc0" stroke-width="0.6"/><path d="M12 11L21 7L21 17L12 21Z" fill="#4a86e8" stroke="#2a5fc0" stroke-width="0.6"/><path d="M9 20H24M9 17V23M24 17V23" stroke="#000" stroke-width="1.2"/><path d="M14 11l5 5m0 -5l-5 5" stroke="#000" stroke-width="1.1"/><rect x="12" y="10" width="9" height="7" fill="#fff" fill-opacity=".5"/></svg>
<svg style="left:471.0px;top:110.5px" width="25.0" height="25.0" viewBox="0 0 24 24"><circle cx="17" cy="10" r="6" fill="#5a90f0" stroke="#2a50c0" stroke-width=".7" stroke-dasharray="2.5 1.5"/><circle cx="17" cy="10" r="2" fill="#dcdcdc"/><path d="M2 20L10 12C9 9 11 6 14 7L12 10L14 12L17 10C17 13 15 15 12 14L4 23Z" fill="#f4c030" stroke="#a87808" stroke-width=".6"/><path d="M3 6C3 1 9 0 10 4" fill="none" stroke="#1a3ab0" stroke-width="1.6"/><path d="M0 5l3 4l3 -4z" fill="#1a3ab0"/></svg>
<svg style="left:502.0px;top:110.5px" width="25.0" height="25.0" viewBox="0 0 24 24"><path d="M2 14L12 10L22 14L12 18Z" fill="url(#gB)" stroke="#2a5fc0" stroke-width=".6"/><path d="M2 14L12 18L12 22L2 18Z" fill="url(#gB2)" stroke="#2a5fc0" stroke-width=".6"/><path d="M12 18L22 14L22 18L12 22Z" fill="#3f7fe6" stroke="#2a5fc0" stroke-width=".6"/><rect x="10" y="3" width="6" height="13" rx="2.5" fill="url(#gCy)" stroke="#3a5fd0" stroke-width=".6"/><path d="M1 11H8" stroke="#e84030" stroke-width="1"/><path d="M0 11l4 -2.5v5z" fill="#e84030"/></svg>
<i class="sep" style="left:532.0px;top:110px;height:27px"></i>
<svg style="left:538.0px;top:110.5px" width="25.0" height="25.0" viewBox="0 0 24 24"><path d="M2 14L12 10L22 14L12 18Z" fill="url(#gB)" stroke="#2a5fc0" stroke-width=".6"/><path d="M2 14L12 18L12 22L2 18Z" fill="url(#gB2)" stroke="#2a5fc0" stroke-width=".6"/><path d="M12 18L22 14L22 18L12 22Z" fill="#3f7fe6" stroke="#2a5fc0" stroke-width=".6"/><rect x="8" y="7" width="6" height="9" fill="#e8f0ff" fill-opacity=".6" stroke="#8aa0e0" stroke-width=".6"/><path d="M11 9L20 4" stroke="#f09020" stroke-width="2.2"/><rect x="19" y="0" width="5" height="8" rx="1" fill="url(#gY)" stroke="#c09018" stroke-width=".6"/></svg>
<svg style="left:569.0px;top:110.5px" width="25.0" height="25.0" viewBox="0 0 24 24"><rect x="7" y="1" width="12" height="8" fill="#f4f4f4" stroke="#000" stroke-width="1.2"/><rect x="9" y="14" width="12" height="8" fill="#f4f4f4" stroke="#000" stroke-width="1.2"/><path d="M4 8C2 14 4 18 10 18" fill="none" stroke="#f07010" stroke-width="2"/><path d="M8 15l4 3l-4 3z" fill="#f07010"/><circle cx="4" cy="5" r="3.2" fill="#f4d030" stroke="#a88008" stroke-width=".7"/><path d="M12 7L18 2M14 20L20 15" stroke="#f09020" stroke-width="2"/></svg>
<svg style="left:600.0px;top:110.5px" width="25.0" height="25.0" viewBox="0 0 24 24"><path d="M4 2L16 15M16 2L4 15" stroke="#111" stroke-width="1.5"/><path d="M2 19H18M2 16V22M18 16V22M20 1V14M18 1H22M18 14H22" stroke="#111" stroke-width="1"/><path d="M22 6l2 2m0 -2l-2 2M9 21l2 2m0 -2l-2 2" stroke="#e02010" stroke-width=".8"/></svg>
<i class="sep" style="left:630.0px;top:110px;height:27px"></i>
<svg style="left:637.0px;top:110.0px" width="26.0" height="26.0" viewBox="0 0 24 24"><path d="M2 14L12 10L22 14L12 18Z" fill="url(#gB)" stroke="#2a5fc0" stroke-width=".6"/><path d="M2 14L12 18L12 22L2 18Z" fill="url(#gB2)" stroke="#2a5fc0" stroke-width=".6"/><path d="M12 18L22 14L22 18L12 22Z" fill="#3f7fe6" stroke="#2a5fc0" stroke-width=".6"/><rect x="10" y="5" width="6" height="12" rx="2.5" fill="url(#gCy)" stroke="#3a5fd0" stroke-width=".6"/><path d="M10 3C5 0 0 5 4 10" fill="none" stroke="#2a50d0" stroke-width="1.8"/><path d="M7 0l4 4l-5 2z" fill="#2a50d0"/><rect x="15" y="15" width="8" height="8" rx="1" fill="url(#gG)" stroke="#555" stroke-width=".7"/><path d="M17 15V12C17 10 21 10 21 12V15" fill="none" stroke="#666" stroke-width="1.3"/></svg>
<svg style="left:668.0px;top:110.5px" width="25.0" height="25.0" viewBox="0 0 24 24"><path d="M2 14L12 10L22 14L12 18Z" fill="url(#gB)" stroke="#2a5fc0" stroke-width=".6"/><path d="M2 14L12 18L12 22L2 18Z" fill="url(#gB2)" stroke="#2a5fc0" stroke-width=".6"/><path d="M12 18L22 14L22 18L12 22Z" fill="#3f7fe6" stroke="#2a5fc0" stroke-width=".6"/><rect x="10" y="5" width="6" height="12" rx="2.5" fill="url(#gCy)" stroke="#3a5fd0" stroke-width=".6"/><path d="M10 3C5 0 0 5 4 10" fill="none" stroke="#2a50d0" stroke-width="1.8"/><path d="M7 0l4 4l-5 2z" fill="#2a50d0"/></svg>
<i class="dd" style="left:699.0px;top:130.5px"></i>
<i class="grip" style="left:714.5px;top:112px;height:23px"></i>
<svg style="left:722.0px;top:111.0px" width="24.0" height="24.0" viewBox="0 0 24 24"><path d="M2 6C8 3 15 4 22 8L20 21C14 16 8 15 4 17Z" fill="url(#gB)" stroke="#3a5fd0" stroke-width=".8"/><path d="M8 4.5L9 15.5M15 5L14 17" stroke="#3a5fd0" stroke-width=".7" fill="none"/></svg>
<svg style="left:753.0px;top:111.0px" width="24.0" height="24.0" viewBox="0 0 24 24"><path d="M2 6C8 3 15 4 22 8L20 21C14 16 8 15 4 17Z" fill="url(#gB)" stroke="#3a5fd0" stroke-width=".8"/><path d="M8 4.5L9 15.5M15 5L14 17M3 10C9 8 15 9 21 13" stroke="#3a5fd0" stroke-width=".7" fill="none"/></svg>
<svg style="left:784.0px;top:110.5px" width="25.0" height="25.0" viewBox="0 0 24 24"><circle cx="11" cy="6" r="5" fill="#f4f4f4" stroke="#111" stroke-width="1.2"/><path d="M11 6L14 3" stroke="#18a030" stroke-width="1.3"/><path d="M2 18C4 14 8 14 11 20" fill="none" stroke="#111" stroke-width="1.2"/><circle cx="2" cy="18" r="1.5" fill="#e02010"/><circle cx="7" cy="15" r="1.5" fill="#e02010"/><circle cx="11" cy="21" r="1.5" fill="#e02010"/><path d="M13 14L21 10L24 12L16 17Z" fill="#2a40c0"/><path d="M14 15L20 12" stroke="#fff" stroke-width="1"/><path d="M5 21l3 2l-3 1z" fill="#18a030"/></svg>
<svg style="left:815.0px;top:111.0px" width="24.0" height="24.0" viewBox="0 0 24 24"><path d="M2 6C8 3 15 4 22 8L20 21C14 16 8 15 4 17Z" fill="url(#gB)" stroke="#3a5fd0" stroke-width=".8"/><path d="M6 8C10 5 17 7 17 11C17 15 12 14 11 12C9 15 5 13 6 8Z" fill="#e8f0ff" stroke="#3a5fd0" stroke-width="1"/></svg>
<svg style="left:845.0px;top:110.5px" width="25.0" height="25.0" viewBox="0 0 24 24"><path d="M3 8C9 3 16 3 21 6L18 22C13 18 8 18 5 20Z" fill="#f4f8ff" stroke="#888" stroke-width=".6"/><path d="M7 6L8 19M11 4.5L11.5 18.5M15 4.5L15 19.5M4 12C10 8 15 9 20 11M4.5 16C10 13 15 14 19 16" stroke="#888" stroke-width=".6" fill="none"/><path d="M3 8C9 3 16 3 21 6M5 20C8 18 13 18 18 22" stroke="#e84020" stroke-width="1.6" fill="none"/><path d="M7 1l5 1l-3 4zM17 17l5 1l-3 4z" fill="#f08a10"/></svg>
<svg style="left:877.0px;top:110.5px" width="25.0" height="25.0" viewBox="0 0 24 24"><path d="M2 14C8 12 10 4 16 2L22 5C16 8 14 16 8 18Z" fill="#e0f4f4" stroke="#e84020" stroke-width="1"/><path d="M2 22C8 20 14 12 23 12" fill="none" stroke="#2a60d8" stroke-width="1.3"/><path d="M8 18L8 22C12 20 16 16 22 16L22 5" fill="#cfe4ff" fill-opacity=".7" stroke="#3a70e0" stroke-width=".8"/></svg>
<svg style="left:909.0px;top:111.0px" width="24.0" height="24.0" viewBox="0 0 24 24"><path d="M1 8C6 3 10 9 14 5C17 2 20 3 21 6L23 16C20 13 17 15 15 18C12 22 8 17 5 20Z" fill="url(#gG)" stroke="#222" stroke-width=".8"/><path d="M5 20C4 14 10 12 15 18" fill="#fff" stroke="#1a30b0" stroke-width=".8"/><path d="M6 16l6 1M7 14l3 5M9 13l3 4" stroke="#1a30b0" stroke-width=".7"/></svg>
<i class="dd" style="left:939.0px;top:121.5px"></i>
<svg style="left:951.0px;top:110.5px" width="25.0" height="25.0" viewBox="0 0 24 24"><path d="M1 8C6 3 10 9 14 5C17 2 20 3 21 6L23 16C20 13 17 15 15 18C12 22 8 17 5 20Z" fill="url(#gG)" stroke="#222" stroke-width=".8"/><path d="M5 20C4 14 10 12 15 18" fill="#fff" stroke="#1a30b0" stroke-width=".8"/><path d="M6 16l6 1M7 14l3 5M9 13l3 4" stroke="#1a30b0" stroke-width=".7"/></svg>
<svg style="left:982.0px;top:111.0px" width="24.0" height="24.0" viewBox="0 0 24 24"><path d="M2 4L21 10L21 22L3 15Z" fill="#dce8ff" stroke="#3a50d8" stroke-width=".9"/><path d="M2 8L21 14M2.5 11.5L21 18M7 5.5L7.5 17M12 7L12 18.5M16.5 8.5L16.5 20.5" stroke="#3a50d8" stroke-width=".8"/><path d="M2 4C0 8 1 12 3 15M21 10C19 14 20 19 21 22" stroke="#e83020" stroke-width="1.2" fill="none"/></svg>
<i class="dd" style="left:1013.0px;top:130.5px"></i>
<div class="tb" style="left:0px;top:140px;width:785px;height:34px"></div>
<div class="tb" style="left:785px;top:140px;width:239px;height:34px"></div>
<i class="grip" style="left:2.5px;top:146px;height:23px"></i>
<svg style="left:12.0px;top:145.0px" width="24.0" height="24.0" viewBox="0 0 24 24"><path d="M2 3L21 7L21 22L2 17Z" fill="#f4f8f0" stroke="#111" stroke-width="1.3"/><path d="M3 4.5L20 8L20 20.5L3 16Z" fill="url(#gGr)"/></svg>
<i class="dd" style="left:42.0px;top:155.5px"></i>
<svg style="left:54.0px;top:144.5px" width="25.0" height="25.0" viewBox="0 0 24 24"><path d="M2 6C5 2 9 4 10 5C13 3 18 3 20 6L20 19C16 22 6 22 2 19Z" fill="url(#gO2)" stroke="#d86808" stroke-width=".8"/><path d="M8 5V20M12 5V21" stroke="#d86808" stroke-width=".7"/><path d="M2 19C6 22 16 22 20 19L20 21C16 24 6 24 2 21Z" fill="#3a70e0"/><path d="M22.5 18V8" stroke="#e02010" stroke-width="1.3"/><path d="M20.5 10L22.5 5L24.5 10Z" fill="#e02010"/></svg>
<svg style="left:86.0px;top:145.0px" width="24.0" height="24.0" viewBox="0 0 24 24"><path d="M12 3C18 2 22 5 21 9C20 12 17 12 17 15L17 20C15 22 13 22 12 22Z" fill="url(#gO2)" stroke="#c86008" stroke-width=".7"/><path d="M12 3C6 2 2 5 3 9C4 12 7 12 7 15L7 20C9 22 11 22 12 22Z" fill="#2f68d8" stroke="#1a3a90" stroke-width=".7"/><ellipse cx="12" cy="5" rx="9" ry="3" fill="#f8a830" stroke="#c86008" stroke-width=".6"/><path d="M12 0V24" stroke="#111" stroke-width="1" stroke-dasharray="3 1.5"/></svg>
<svg style="left:115.0px;top:144.5px" width="25.0" height="25.0" viewBox="0 0 24 24"><path d="M12 3L21 7L12 11L3 7Z" fill="#cfe0fb" stroke="#2a5fc0" stroke-width="0.6"/><path d="M3 7L12 11L12 21L3 17Z" fill="url(#gB)" stroke="#2a5fc0" stroke-width="0.6"/><path d="M12 11L21 7L21 17L12 21Z" fill="#2f6fdc" stroke="#2a5fc0" stroke-width="0.6"/><ellipse cx="7.5" cy="13" rx="3" ry="3.6" fill="#f08a10" stroke="#a85808" stroke-width=".6"/></svg>
<svg style="left:146.0px;top:144.0px" width="26.0" height="26.0" viewBox="0 0 24 24"><path d="M1 11L12 3L23 10L14 21L7 19Z" fill="url(#gB)" stroke="#5a90e8" stroke-width=".7"/><ellipse cx="12" cy="11" rx="6.5" ry="4.5" fill="url(#gO)" stroke="#d07010" stroke-width=".7"/><ellipse cx="12" cy="9.5" rx="4" ry="2.2" fill="#ffd870"/></svg>
<svg style="left:179.0px;top:145.0px" width="24.0" height="24.0" viewBox="0 0 24 24"><path d="M2 12C6 3 16 2 22 9L18 20C14 14 9 14 7 18Z" fill="url(#gB)" stroke="#5a80d0" stroke-width=".7"/><path d="M9 14L14 7L17 9L12 16Z" fill="#f4a820" stroke="#b87008" stroke-width=".6"/><circle cx="10.5" cy="15" r="1.5" fill="#e02010"/></svg>
<svg style="left:209.0px;top:145.0px" width="24.0" height="24.0" viewBox="0 0 24 24"><rect x="6" y="2" width="11" height="20" rx="3" fill="#e4ecf8" stroke="#7890c0" stroke-width=".8"/><path d="M6 6h11M6 9h11M6 12h11M6 15h11M6 18h11" stroke="#7890c0" stroke-width=".9"/><path d="M11.5 0V24" stroke="#e84020" stroke-width=".9"/></svg>
<i class="sep" style="left:239.0px;top:144px;height:27px"></i>
<svg style="left:245.0px;top:144.5px" width="25.0" height="25.0" viewBox="0 0 24 24"><path d="M2 12L12 8L22 12L12 16Z" fill="url(#gB)" stroke="#2a5fc0" stroke-width=".6"/><path d="M2 12L12 16L12 20L2 16Z" fill="url(#gB2)" stroke="#2a5fc0" stroke-width=".6"/><path d="M12 16L22 12L22 16L12 20Z" fill="#3f7fe6" stroke="#2a5fc0" stroke-width=".6"/><ellipse cx="7" cy="11" rx="2" ry="2.4" fill="#f08a10" stroke="#c06008" stroke-width=".4"/><ellipse cx="11" cy="9" rx="2" ry="2.4" fill="#f08a10" stroke="#c06008" stroke-width=".4"/><ellipse cx="15" cy="7" rx="2" ry="2.4" fill="#f08a10" stroke="#c06008" stroke-width=".4"/><ellipse cx="10" cy="14" rx="2" ry="2.4" fill="#f08a10" stroke="#c06008" stroke-width=".4"/><ellipse cx="14" cy="12" rx="2" ry="2.4" fill="#f08a10" stroke="#c06008" stroke-width=".4"/><ellipse cx="18" cy="10" rx="2" ry="2.4" fill="#f08a10" stroke="#c06008" stroke-width=".4"/></svg>
<svg style="left:278.0px;top:145.0px" width="24.0" height="24.0" viewBox="0 0 24 24"><path d="M2 15L12 11L22 15L12 19Z" fill="url(#gB)" stroke="#2a5fc0" stroke-width=".6"/><path d="M2 15L12 19L12 23L2 19Z" fill="url(#gB2)" stroke="#2a5fc0" stroke-width=".6"/><path d="M12 19L22 15L22 19L12 23Z" fill="#3f7fe6" stroke="#2a5fc0" stroke-width=".6"/><path d="M4 4L12 2L20 4L12 6Z" fill="#f8d040" stroke="#c09010" stroke-width=".7"/><path d="M12 14V8" stroke="#f07010" stroke-width="1.6"/><path d="M9.5 9.5L12 6L14.5 9.5Z" fill="#f07010"/></svg>
<svg style="left:308.0px;top:144.5px" width="25.0" height="25.0" viewBox="0 0 24 24"><rect x="2" y="15" width="6" height="6" fill="#f8e040" stroke="#f09080" stroke-width=".9"/><rect x="14" y="5" width="6" height="6" fill="#f8e040" stroke="#888" stroke-width=".8"/><path d="M8 15L12 11" stroke="#f07010" stroke-width="1.5"/><circle cx="11" cy="12" r="1.5" fill="#f07010"/><path d="M12 2l-3 2l3 2M22 8l2 3l-3 1M20 14l2 2l-3 1" stroke="#2a60d8" stroke-width="1.3" fill="none"/></svg>
<svg style="left:340.0px;top:144.5px" width="25.0" height="25.0" viewBox="0 0 24 24"><circle cx="15" cy="9" r="6.5" fill="#1a9898" stroke="#111" stroke-width="1.1"/><rect x="3" y="10" width="12" height="12" fill="#1a9898" stroke="#111" stroke-width="1.1"/><path d="M9 10A6.5 6.5 0 0 0 15 15.5" stroke="#5ab8b8" stroke-width=".8" fill="none"/><path d="M0 3.5H7M3.5 0V7" stroke="#e02010" stroke-width="1.3"/></svg>
<i class="dd" style="left:370.0px;top:155.5px"></i>
<svg style="left:382.0px;top:145.0px" width="24.0" height="24.0" viewBox="0 0 24 24"><path d="M1 21L1 6C3 1 9 1 11 6L11 21C8 19 4 19 1 21Z" fill="url(#gCy)" stroke="#3a60d0" stroke-width=".7"/><path d="M13 21L13 6C15 1 21 1 23 6L23 21C20 19 16 19 13 21Z" fill="url(#gCy)" stroke="#3a60d0" stroke-width=".7"/><path d="M11 7h2M11 10h2M11 13h2M11 16h2M11 19h2" stroke="#e84060" stroke-width="1"/></svg>
<svg style="left:413.0px;top:144.5px" width="25.0" height="25.0" viewBox="0 0 24 24"><path d="M1 9L10 6L14 8L14 18L5 21L1 19Z" fill="url(#gB)" stroke="#3a60d0" stroke-width=".7"/><path d="M10 8L20 5L23 7L23 17L14 20L10 18Z" fill="#f8b860" fill-opacity=".8" stroke="#e06010" stroke-width=".8" stroke-dasharray="2 1"/></svg>
<svg style="left:444.0px;top:145.0px" width="24.0" height="24.0" viewBox="0 0 24 24"><path d="M5 22C9 16 8 8 12 2L22 6C16 10 17 18 14 24Z" fill="url(#gB)" stroke="#3a60d0" stroke-width=".6"/><path d="M1 16C6 18 10 20 14 24L5 22Z" fill="#3a70e0"/><path d="M12 2L22 6L16 14Z" fill="#d0d4dc"/><path d="M11 2L20 16" stroke="#e03020" stroke-width="1.3"/></svg>
<svg style="left:475.0px;top:144.5px" width="25.0" height="25.0" viewBox="0 0 24 24"><path d="M12 1L22 1L22 14L16 17L8 13Z" fill="url(#gO2)" stroke="#e06010" stroke-width=".7"/><path d="M8 13L16 17L22 14L22 22L2 22C3 17 5 15 8 13Z" fill="url(#gO)" stroke="#e06010" stroke-width=".7"/></svg>
<svg style="left:506.0px;top:144.5px" width="25.0" height="25.0" viewBox="0 0 24 24"><path d="M2 11L12 7L22 11L12 15Z" fill="#e4ecf8" stroke="#2a5fc0" stroke-width=".6"/><path d="M2 11L12 15L12 19L2 15Z" fill="url(#gB2)" stroke="#2a5fc0" stroke-width=".6"/><path d="M12 15L22 11L22 15L12 19Z" fill="#5a90e8" stroke="#2a5fc0" stroke-width=".6"/><path d="M4 14L20 5" stroke="#e03020" stroke-width="1.1"/></svg>
<svg style="left:538.0px;top:145.0px" width="24.0" height="24.0" viewBox="0 0 24 24"><path d="M1 8L9 4L20 7L20 20L12 23L1 19Z" fill="url(#gB)" stroke="#2a50c0" stroke-width=".7"/><path d="M4 10L11 12L11 19L4 17Z" fill="#f8a830"/><path d="M4 10L9 8L15 9L11 12Z" fill="#ffe090"/><path d="M15 7L20 7L20 20L15 22Z" fill="#2f6fdc"/></svg>
<svg style="left:569.0px;top:145.0px" width="24.0" height="24.0" viewBox="0 0 24 24"><path d="M1 8C7 3 13 4 17 8L16 16C12 12 7 12 3 16Z" fill="url(#gB)" stroke="#3a60d0" stroke-width=".6"/><path d="M3 16C7 12 12 12 16 16L16 19C12 15 7 15 3 19Z" fill="#f4d040" stroke="#c09010" stroke-width=".5"/><path d="M21 3V10M21 14V22" stroke="#e02010" stroke-width="1.3"/><path d="M19 5l2 -4l2 4zM19 20l2 3l2 -3zM19 9l2 2l2 -2zM19 16l2 -2l2 2z" fill="#e02010"/></svg>
<svg style="left:599.0px;top:145.0px" width="24.0" height="24.0" viewBox="0 0 24 24"><path d="M3 2L11 0L11 9L3 11Z" fill="url(#gB)" stroke="#3a60d0" stroke-width=".6"/><path d="M9 9C12 13 17 12 22 7L22 19C17 23 12 23 9 20Z" fill="url(#gO2)" stroke="#d07010" stroke-width=".6"/><path d="M3 16l5 1l-3 3z" fill="#f07010"/></svg>
<svg style="left:629.0px;top:144.0px" width="26.0" height="26.0" viewBox="0 0 24 24"><path d="M3 10C8 5 16 5 21 9L21 19L12 22L3 19Z" fill="url(#gB)" stroke="#3a60d0" stroke-width=".6"/><path d="M12 12L21 9L21 19L12 22Z" fill="#2f6fdc"/><path d="M1 20L2 8C6 2 18 1 23 5L23 10" fill="none" stroke="#e03020" stroke-width=".9" stroke-dasharray="2 1.3"/></svg>
<i class="sep" style="left:660.0px;top:144px;height:27px"></i>
<svg style="left:667.0px;top:145.0px" width="24.0" height="24.0" viewBox="0 0 24 24"><path d="M12 3L21 7L12 11L3 7Z" fill="url(#gO)" stroke="#2a5fc0" stroke-width="0.6"/><path d="M3 7L12 11L12 21L3 17Z" fill="url(#gB)" stroke="#2a5fc0" stroke-width="0.6"/><path d="M12 11L21 7L21 17L12 21Z" fill="#2f6fdc" stroke="#2a5fc0" stroke-width="0.6"/><path d="M3 7L12 11L12 14L3 10Z" fill="#f8a020"/></svg>
<svg style="left:698.0px;top:144.5px" width="25.0" height="25.0" viewBox="0 0 24 24"><path d="M14 2L20 5L20 21L14 18Z" fill="#dce8ff" stroke="#7a98d8" stroke-width=".7"/><path d="M14 4C14 12 10 16 2 18L9 23C16 21 20 16 20 7Z" fill="url(#gO)" stroke="#e08020" stroke-width=".6"/><path d="M2 18L9 23L16 22L8 18Z" fill="#cfe0fb" stroke="#7a98d8" stroke-width=".5"/></svg>
<svg style="left:729.0px;top:144.5px" width="25.0" height="25.0" viewBox="0 0 24 24"><path d="M14 2L20 5L20 21L14 18Z" fill="#dce8ff" stroke="#7a98d8" stroke-width=".7"/><path d="M14 4C14 12 10 16 2 18L9 23C16 21 20 16 20 7Z" fill="url(#gO)" stroke="#e08020" stroke-width=".6"/><path d="M2 18L9 23L16 22L8 18Z" fill="#cfe0fb" stroke="#7a98d8" stroke-width=".5"/></svg>
<svg style="left:772.5px;top:145px" width="9" height="7" viewBox="0 0 9 7"><path d="M.7 .5L3.500 3.500L.7 6.500M4.700 .5L7.500 3.500L4.700 6.500" fill="none" stroke="#000" stroke-width="1.500"/></svg>
<i class="dd" style="left:774.0px;top:163.5px"></i>
<i class="grip" style="left:788.5px;top:146px;height:23px"></i>
<svg style="left:795.0px;top:144.5px" width="25.0" height="25.0" viewBox="0 0 24 24"><path d="M9 1L19 1L23 5L23 17L9 17Z" fill="#f4f8ff" stroke="#8aa0d8" stroke-width=".8"/><rect x="12" y="6" width="9" height="7" fill="#f8b0b0" stroke="#e06060" stroke-width=".5"/><path d="M12 8h9M12 10h9" stroke="#e06060" stroke-width=".6"/><path d="M1 20L7 14C6 11 9 8 12 10L10 12L12 14L14 12C15 15 12 17 10 16L4 23Z" fill="#f4c030" stroke="#a87808" stroke-width=".6"/></svg>
<svg style="left:827.0px;top:145.0px" width="24.0" height="24.0" viewBox="0 0 24 24"><path d="M1 13H22" stroke="#111" stroke-width="1.2"/><path d="M6 2C14 2 20 8 22 14" fill="none" stroke="#111" stroke-width="1.3"/><path d="M11 6L22 18" stroke="#e03020" stroke-width="1.3"/><path d="M3 23C6 19 12 20 18 16" fill="none" stroke="#777" stroke-width=".8" stroke-dasharray="1.5 1"/></svg>
<svg style="left:858.0px;top:145.0px" width="24.0" height="24.0" viewBox="0 0 24 24"><path d="M1 12H15M13 2V23" stroke="#111" stroke-width="1.5"/><path d="M13 12H22" stroke="#888" stroke-width=".8" stroke-dasharray="1.5 1"/><path d="M8 5L20 17" stroke="#e03020" stroke-width="1.3"/></svg>
<svg style="left:888.0px;top:145.0px" width="24.0" height="24.0" viewBox="0 0 24 24"><path d="M1 21C10 21 10 17 12 12C14 6 16 4 22 3" fill="none" stroke="#111" stroke-width="1.5"/><path d="M7 3L16 12M8 13L14 21" stroke="#e03020" stroke-width="1.3"/></svg>
<svg style="left:919.0px;top:145.0px" width="24.0" height="24.0" viewBox="0 0 24 24"><path d="M1 2H10M21 12V23" stroke="#111" stroke-width="1.5"/><path d="M10 2C17 2 21 6 21 12" fill="none" stroke="#e03020" stroke-width="1.5"/><path d="M10 2H21V12" stroke="#777" stroke-width=".8" stroke-dasharray="1.5 1" fill="none"/></svg>
<svg style="left:951.0px;top:145.0px" width="24.0" height="24.0" viewBox="0 0 24 24"><path d="M1 21C8 21 12 16 13 10" fill="none" stroke="#111" stroke-width="1.5"/><path d="M13 10C14 7 15 5 17 3" fill="none" stroke="#e03020" stroke-width="1.6"/><path d="M20 6V14" stroke="#f08010" stroke-width="1.5"/><path d="M18 7l2 -4l2 4zM18 13l2 4l2 -4z" fill="#f08010"/></svg>
<svg style="left:981.0px;top:144.0px" width="26.0" height="26.0" viewBox="0 0 24 24"><path d="M1 10C6 2 10 8 14 5C17 2 20 3 23 2" fill="none" stroke="#111" stroke-width="1.4"/><path d="M1 22C6 16 16 14 23 17" fill="none" stroke="#e03020" stroke-width="1.5"/><rect x="10" y="8" width="4" height="4" fill="#f08a10"/><path d="M8.5 11L12 16L15.5 11Z" fill="#e83818"/></svg>
<i class="dd" style="left:1013.0px;top:164.5px"></i>
<div class="tb" style="left:0px;top:174px;width:53px;height:34px"></div>
<div class="tb" style="left:53px;top:174px;width:120px;height:34px"></div>
<div class="tb" style="left:173px;top:174px;width:373px;height:34px"></div>
<div class="tb" style="left:546px;top:174px;width:85px;height:34px"></div>
<div class="tb" style="left:631px;top:174px;width:147px;height:34px"></div>
<div class="tb" style="left:778px;top:174px;width:52px;height:34px"></div>
<div class="tb" style="left:830px;top:174px;width:53px;height:34px"></div>
<div class="tb" style="left:883px;top:174px;width:141px;height:34px"></div>
<i class="grip" style="left:2.5px;top:180px;height:23px"></i>
<svg style="left:11.0px;top:178.0px" width="24.0" height="24.0" viewBox="0 0 24 24"><rect x="3" y="4" width="18" height="17" fill="none" stroke="#1a2a9a" stroke-width="1.4" stroke-dasharray="3 1"/><rect x="7" y="8" width="11" height="11" fill="none" stroke="#1a2a9a" stroke-width="1.6"/><rect x="9.5" y="10.5" width="6" height="6" fill="#f4e040"/><rect x="1.3" y="2.3" width="3.4" height="3.4" fill="#1a2a9a"/><rect x="19.3" y="2.3" width="3.4" height="3.4" fill="#1a2a9a"/><rect x="1.3" y="19.3" width="3.4" height="3.4" fill="#1a2a9a"/><rect x="19.3" y="19.3" width="3.4" height="3.4" fill="#1a2a9a"/></svg>
<svg style="left:39.5px;top:179px" width="9" height="7" viewBox="0 0 9 7"><path d="M.7 .5L3.500 3.500L.7 6.500M4.700 .5L7.500 3.500L4.700 6.500" fill="none" stroke="#000" stroke-width="1.500"/></svg>
<i class="dd" style="left:41.0px;top:197.5px"></i>
<i class="grip" style="left:56.5px;top:180px;height:23px"></i>
<svg style="left:64.0px;top:178.0px" width="24.0" height="24.0" viewBox="0 0 24 24"><ellipse cx="12" cy="4" rx="7" ry="2" fill="none" stroke="#2a4ac8" stroke-width="1.3"/><ellipse cx="12" cy="6.5" rx="7" ry="2" fill="none" stroke="#2a4ac8" stroke-width="1.3"/><ellipse cx="12" cy="9" rx="7" ry="2" fill="none" stroke="#2a4ac8" stroke-width="1.3"/><ellipse cx="12" cy="11.5" rx="7" ry="2" fill="none" stroke="#2a4ac8" stroke-width="1.3"/><ellipse cx="12" cy="14" rx="7" ry="2" fill="none" stroke="#2a4ac8" stroke-width="1.3"/><ellipse cx="12" cy="16.5" rx="7" ry="2" fill="none" stroke="#2a4ac8" stroke-width="1.3"/><ellipse cx="12" cy="19" rx="7" ry="2" fill="none" stroke="#2a4ac8" stroke-width="1.3"/><ellipse cx="12" cy="21" rx="7" ry="2" fill="none" stroke="#2a4ac8" stroke-width="1.3"/></svg>
<svg style="left:96.0px;top:178.0px" width="24.0" height="24.0" viewBox="0 0 24 24"><g transform="rotate(-28 12 12)"><ellipse cx="12" cy="5" rx="4.5" ry="1.6" fill="none" stroke="#2a4ac8" stroke-width="1.2"/><ellipse cx="12" cy="7" rx="4.5" ry="1.6" fill="none" stroke="#2a4ac8" stroke-width="1.2"/><ellipse cx="12" cy="9" rx="4.5" ry="1.6" fill="none" stroke="#2a4ac8" stroke-width="1.2"/><ellipse cx="12" cy="11" rx="4.5" ry="1.6" fill="none" stroke="#2a4ac8" stroke-width="1.2"/><ellipse cx="12" cy="13" rx="4.5" ry="1.6" fill="none" stroke="#2a4ac8" stroke-width="1.2"/><ellipse cx="12" cy="15" rx="4.5" ry="1.6" fill="none" stroke="#2a4ac8" stroke-width="1.2"/><ellipse cx="12" cy="17" rx="4.5" ry="1.6" fill="none" stroke="#2a4ac8" stroke-width="1.2"/><ellipse cx="12" cy="19" rx="4.5" ry="1.6" fill="none" stroke="#2a4ac8" stroke-width="1.2"/><path d="M12 3V0C9 -2 8 1 10 2M12 20V23C14 25 16 23 14 22" fill="none" stroke="#2a4ac8" stroke-width="1.1"/></g></svg>
<i class="sep" style="left:125.0px;top:178px;height:27px"></i>
<svg style="left:131.0px;top:177.5px" width="25.0" height="25.0" viewBox="0 0 24 24"><ellipse cx="8" cy="17" rx="5" ry="4" fill="none" stroke="#3a5ad0" stroke-width="1.2"/><ellipse cx="12" cy="15" rx="5" ry="4" fill="none" stroke="#3a5ad0" stroke-width="1.2"/><ellipse cx="16" cy="13" rx="5" ry="4" fill="none" stroke="#3a5ad0" stroke-width="1.2"/><ellipse cx="19" cy="11" rx="5" ry="4" fill="none" stroke="#3a5ad0" stroke-width="1.2"/><path d="M2 1L20 20M16 3L4 20" stroke="#222" stroke-width="1.6"/></svg>
<i class="dd" style="left:162.0px;top:197.5px"></i>
<i class="grip" style="left:177.5px;top:180px;height:23px"></i>
<svg style="left:185.0px;top:177.5px" width="25.0" height="25.0" viewBox="0 0 24 24"><path d="M12 2L21 6L12 10L3 6Z" fill="url(#gP)" stroke="#b040c0" stroke-width=".6"/><path d="M3 6L12 10L12 20L3 16Z" fill="url(#gO)" stroke="#e04010" stroke-width=".8"/><path d="M12 10L21 6L21 16L12 20Z" fill="#a35cc9" stroke="#8030a0" stroke-width=".6"/><path d="M14 11V23M8 17H20" stroke="#fff" stroke-width="3.4"/><path d="M14 11V23M8 17H20" stroke="#222" stroke-width="1.2"/><path d="M12 13l2 -3l2 3zM12 21l2 3l2 -3zM10 15l-3 2l3 2zM18 15l3 2l-3 2z" fill="#fff" stroke="#222" stroke-width=".8"/></svg>
<i class="dd" style="left:216.0px;top:188.5px"></i>
<svg style="left:229.0px;top:177.5px" width="25.0" height="25.0" viewBox="0 0 24 24"><path d="M3 8C5 3 12 2 16 4L21 7L21 16L12 20L3 16Z" fill="url(#gP)" stroke="#b040c0" stroke-width=".6"/><path d="M3 8C6 6 10 7 12 10L12 20L3 16Z" fill="url(#gO)" stroke="#e04010" stroke-width=".8"/><path d="M12 10L21 7L21 16L12 20Z" fill="#a35cc9"/><path d="M14 15L9 23H19Z" fill="#fff" stroke="#111" stroke-width="1.2"/></svg>
<i class="dd" style="left:259.0px;top:188.5px"></i>
<svg style="left:271.0px;top:178.0px" width="24.0" height="24.0" viewBox="0 0 24 24"><path d="M12 2L21 6L12 10L3 6Z" fill="url(#gP)" stroke="#b040c0" stroke-width=".6"/><path d="M3 6L12 10L12 20L3 16Z" fill="url(#gO)" stroke="#e04010" stroke-width=".8"/><path d="M12 10L21 6L21 16L12 20Z" fill="#a35cc9" stroke="#8030a0" stroke-width=".6"/><path d="M9 10L22 22M22 10L9 22" stroke="#fff" stroke-width="3.6"/><path d="M9 10L22 22M22 10L9 22" stroke="#222" stroke-width="1.8"/></svg>
<svg style="left:302.0px;top:177.5px" width="25.0" height="25.0" viewBox="0 0 24 24"><path d="M12 2L21 6L12 10L3 6Z" fill="url(#gP)" stroke="#b040c0" stroke-width=".6"/><path d="M3 6L12 10L12 20L3 16Z" fill="url(#gO)" stroke="#e04010" stroke-width=".8"/><path d="M12 10L21 6L21 16L12 20Z" fill="#a35cc9" stroke="#8030a0" stroke-width=".6"/><path d="M9 8L15 8L17 10L17 17L9 17Z" fill="#f0f4ff" stroke="#3a5ab8" stroke-width=".8"/><path d="M13 13L19 13L22 16L22 24L13 24Z" fill="#f0f4ff" stroke="#3a5ab8" stroke-width=".8"/><path d="M15 18h5M15 20h5M15 22h5" stroke="#3a5ab8" stroke-width=".7"/></svg>
<i class="dd" style="left:333.0px;top:188.5px"></i>
<svg style="left:345.0px;top:177.5px" width="25.0" height="25.0" viewBox="0 0 24 24"><path d="M12 2L21 6L12 10L3 6Z" fill="url(#gP)" stroke="#b040c0" stroke-width=".6"/><path d="M3 6L12 10L12 20L3 16Z" fill="url(#gO)" stroke="#e04010" stroke-width=".8"/><path d="M12 10L21 6L21 16L12 20Z" fill="#a35cc9" stroke="#8030a0" stroke-width=".6"/><rect x="15" y="8" width="6" height="6" fill="#e8f0e8" stroke="#111" stroke-width="1.1"/><rect x="15" y="16" width="6" height="6" fill="#e8f0e8" stroke="#111" stroke-width="1.1"/></svg>
<i class="dd" style="left:376.0px;top:188.5px"></i>
<svg style="left:388.0px;top:177.5px" width="25.0" height="25.0" viewBox="0 0 24 24"><path d="M12 2L21 6L12 10L3 6Z" fill="url(#gP)" stroke="#b040c0" stroke-width=".6"/><path d="M3 6L12 10L12 20L3 16Z" fill="url(#gO)" stroke="#e04010" stroke-width=".8"/><path d="M12 10L21 6L21 16L12 20Z" fill="#a35cc9" stroke="#8030a0" stroke-width=".6"/><path d="M8 20H23M8 17V23M23 17V23" stroke="#fff" stroke-width="3"/><path d="M8 20H23M8 17V23M23 17V23" stroke="#000" stroke-width="1.2"/><path d="M13 11l5 5m0 -5l-5 5" stroke="#000" stroke-width="1.1"/><path d="M8 20l3 -1.5v3zM23 20l-3 -1.5v3z"/></svg>
<i class="dd" style="left:419.0px;top:188.5px"></i>
<svg style="left:431.0px;top:177.5px" width="25.0" height="25.0" viewBox="0 0 24 24"><path d="M12 2L21 6L12 10L3 6Z" fill="url(#gP)" stroke="#b040c0" stroke-width=".6"/><path d="M3 6L12 10L12 20L3 16Z" fill="url(#gO)" stroke="#e04010" stroke-width=".8"/><path d="M12 10L21 6L21 16L12 20Z" fill="#a35cc9" stroke="#8030a0" stroke-width=".6"/><rect x="12" y="13" width="7" height="7" fill="none" stroke="#111" stroke-width="1.3"/><rect x="15" y="16" width="7" height="7" fill="none" stroke="#111" stroke-width="1.3"/><rect x="11" y="12" width="2.4" height="2.4" fill="#1a2a9a"/><rect x="20.6" y="12" width="2.4" height="2.4" fill="#1a2a9a"/><rect x="11" y="21.6" width="2.4" height="2.4" fill="#1a2a9a"/><rect x="20.6" y="21.6" width="2.4" height="2.4" fill="#1a2a9a"/></svg>
<svg style="left:463.0px;top:178.0px" width="24.0" height="24.0" viewBox="0 0 24 24"><path d="M12 2L21 6L21 16L12 20L3 16L3 6Z" fill="#f0d8f4" stroke="#c080d0" stroke-width=".7"/><path d="M3 6L12 10L21 6M12 10V20" stroke="#c080d0" stroke-width=".7" fill="none"/><path d="M12 10L21 6L21 16L12 20Z" fill="#f8a868" fill-opacity=".7"/><path d="M12 2V12" stroke="#f07010" stroke-width="1" stroke-dasharray="1.5 1"/><path d="M12 14L7 23H17Z" fill="#fff" stroke="#111" stroke-width="1.2"/></svg>
<svg style="left:493.0px;top:177.5px" width="25.0" height="25.0" viewBox="0 0 24 24"><path d="M12 2L21 6L12 10L3 6Z" fill="url(#gP)" stroke="#b040c0" stroke-width=".6"/><path d="M3 6L12 10L12 20L3 16Z" fill="url(#gO)" stroke="#e04010" stroke-width=".8"/><path d="M12 10L21 6L21 16L12 20Z" fill="#a35cc9" stroke="#8030a0" stroke-width=".6"/><path d="M12 11L21 23" stroke="#fff" stroke-width="4"/><path d="M12 11L21 23" stroke="#111" stroke-width="2.2"/><path d="M11 6l1.2 3l3 .6l-2.6 1.6l.6 3.2l-2.4 -2l-2.8 1.4l1.2 -3l-2.2 -2.2l3.2 0z" fill="#f8e040" stroke="#c09010" stroke-width=".4"/></svg>
<i class="dd" style="left:524.0px;top:188.5px"></i>
<i class="dd" style="left:535.0px;top:197.5px"></i>
<i class="grip" style="left:550.5px;top:180px;height:23px"></i>
<svg style="left:557.0px;top:177.5px" width="25.0" height="25.0" viewBox="0 0 24 24"><path d="M1 9C6 4 9 10 13 6L20 13C16 16 13 11 8 17Z" fill="#f4f4fa" stroke="#e03838" stroke-width=".9"/><path d="M5 14C10 9 13 15 17 11L23 17C19 20 16 16 12 22Z" fill="#f4f4fa" stroke="#3a50d0" stroke-width=".9"/></svg>
<svg style="left:588.0px;top:177.5px" width="25.0" height="25.0" viewBox="0 0 24 24"><path d="M1 12C6 6 12 3 16 2L23 10C18 12 12 16 9 22Z" fill="#eef0f8" stroke="#e03838" stroke-width="1.4"/><path d="M5 11L14 17M9 8L17 14M12 5L20 12M4 15C9 9 14 7 19 6M7 19C11 13 16 11 21 9" stroke="#7080c0" stroke-width=".7" fill="none"/></svg>
<i class="dd" style="left:620.0px;top:197.5px"></i>
<i class="grip" style="left:634.5px;top:180px;height:23px"></i>
<svg style="left:642.0px;top:177.5px" width="25.0" height="25.0" viewBox="0 0 24 24"><rect x="1" y="3" width="9" height="5" fill="#5a80e0" stroke="#2a40a0" stroke-width=".6"/><rect x="2" y="1" width="2" height="2" fill="#2a40a0"/><rect x="7" y="1" width="2" height="2" fill="#2a40a0"/><path d="M3.5 8h4v3l-2 2l-2 -2z" fill="#c040c0"/><path d="M6 14L11 21L23 6" fill="none" stroke="#18a828" stroke-width="3.2"/></svg>
<svg style="left:673.0px;top:177.5px" width="25.0" height="25.0" viewBox="0 0 24 24"><rect x="9" y="3" width="9" height="5" fill="#5a80e0" stroke="#2a40a0" stroke-width=".6"/><rect x="10" y="1" width="2" height="2" fill="#2a40a0"/><rect x="15" y="1" width="2" height="2" fill="#2a40a0"/><path d="M11.5 8h4v3l-2 2l-2 -2z" fill="#c040c0"/><rect x="11" y="10" width="12" height="13" fill="#f0f4ff" stroke="#6a88d0" stroke-width=".8"/><path d="M13 13h8M13 16h8M13 19h8" stroke="#6a88d0" stroke-width=".9"/><path d="M3 8V20M3 14H8M3 20H8" stroke="#3a50b0" stroke-width=".8" fill="none"/><rect x="1" y="5" width="4" height="4" fill="#f4e060" stroke="#a08010" stroke-width=".5"/><rect x="6" y="12" width="4" height="4" fill="#f4e060" stroke="#a08010" stroke-width=".5"/><rect x="6" y="18" width="4" height="4" fill="#f4e060" stroke="#a08010" stroke-width=".5"/></svg>
<svg style="left:704.0px;top:177.5px" width="25.0" height="25.0" viewBox="0 0 24 24"><rect x="1" y="2" width="21" height="18" fill="#fff" stroke="#222" stroke-width=".8"/><path d="M1 6.5h21M1 11h21M1 15.5h21M6 2v18M11 2v18M16 2v18" stroke="#222" stroke-width=".7"/><rect x="1" y="15.5" width="21" height="4.5" fill="#f4d020"/><rect x="13" y="12" width="9" height="5" fill="#5a80e0" stroke="#2a40a0" stroke-width=".6"/><rect x="14" y="10" width="2" height="2" fill="#2a40a0"/><rect x="19" y="10" width="2" height="2" fill="#2a40a0"/><path d="M15.5 17h4v3l-2 2l-2 -2z" fill="#c040c0"/></svg>
<svg style="left:736.0px;top:177.0px" width="26.0" height="26.0" viewBox="0 0 24 24"><path d="M5 9L5 19L14 23L14 13ZM5 9L20 13M5 19L20 13M14 13L20 13M14 23L20 13" fill="none" stroke="#222" stroke-width="1"/><path d="M5 9V2" stroke="#1a30c0" stroke-width="1.2"/><path d="M3 4l2 -4l2 4z" fill="#1a30c0"/><path d="M20 13l4 -2" stroke="#18a030" stroke-width="1.2"/><path d="M14 23l6 1" stroke="#e02010" stroke-width="1.2"/></svg>
<i class="dd" style="left:766.0px;top:197.5px"></i>
<i class="grip" style="left:781.5px;top:180px;height:23px"></i>
<svg style="left:789.0px;top:178.0px" width="24.0" height="24.0" viewBox="0 0 24 24"><path d="M14 2V12H23" fill="none" stroke="#e02010" stroke-width="1.4"/><path d="M12 4l2 -4l2 4zM21 10l4 2l-4 2z" fill="#e02010"/><path d="M2 8L8 3" stroke="#f09020" stroke-width="2"/><path d="M3 12V21L12 23" fill="none" stroke="#1a30c0" stroke-width="1.4"/><path d="M1 14l2 -4l2 4z" fill="#1a30c0"/><path d="M3 21L11 16" stroke="#18a030" stroke-width="1.6"/><path d="M3 21L9 24" stroke="#e02010" stroke-width="1.4"/><text x="9" y="22" font-size="8.500" font-weight="bold" fill="#111" font-family="Liberation Sans,sans-serif">ABS</text></svg>
<svg style="left:817.5px;top:179px" width="9" height="7" viewBox="0 0 9 7"><path d="M.7 .5L3.500 3.500L.7 6.500M4.700 .5L7.500 3.500L4.700 6.500" fill="none" stroke="#000" stroke-width="1.500"/></svg>
<i class="dd" style="left:819.0px;top:197.5px"></i>
<i class="grip" style="left:834.5px;top:180px;height:23px"></i>
<div class="mjtc" style="left:842px;top:179px"><span>模具</span><span>图层</span></div>
<svg style="left:870.5px;top:179px" width="9" height="7" viewBox="0 0 9 7"><path d="M.7 .5L3.500 3.500L.7 6.500M4.700 .5L7.500 3.500L4.700 6.500" fill="none" stroke="#000" stroke-width="1.500"/></svg>
<i class="dd" style="left:872.0px;top:197.5px"></i>
<i class="grip" style="left:886.5px;top:180px;height:23px"></i>
<span class="tbt" style="left:894px;top:181px">实透</span>
<span class="tbt" style="left:925px;top:181px">还原</span>
<span class="tbt" style="left:956px;top:181px">替换</span>
<span class="tbt" style="left:987px;top:181px">6</span>
<svg style="left:1011.5px;top:179px" width="9" height="7" viewBox="0 0 9 7"><path d="M.7 .5L3.500 3.500L.7 6.500M4.700 .5L7.500 3.500L4.700 6.500" fill="none" stroke="#000" stroke-width="1.500"/></svg>
<i class="dd" style="left:1013.0px;top:197.5px"></i>

<!-- selbar -->
<div class="tb" style="left:0;top:208px;width:1024px;height:30px"></div>
<div class="combo" style="left:6px;top:214px;width:142px"><span>没有选择过滤器</span><b><i></i></b></div>
<div class="combo" style="left:156px;top:214px;width:151px"><span>整个装配</span><b><i></i></b></div>
<svg style="left:314.0px;top:213.5px" width="19" height="19" viewBox="0 0 24 24"><path d="M3 8h7v6h5v8H3z" fill="#b4b4ae" stroke="#9a9a94" stroke-width=".8"/><circle cx="8" cy="8" r="5" fill="none" stroke="#b09088" stroke-width="1.200"/><path d="M8 1V15M1 8H15" stroke="#b09088" stroke-width="1"/><circle cx="17" cy="7" r="4" fill="none" stroke="#b0a888" stroke-width="2.400"/><circle cx="19" cy="14" r="4" fill="none" stroke="#b0a888" stroke-width="2.400"/></svg>
<i class="sep" style="left:336.0px;top:212px;height:23px"></i>
<svg style="left:343.0px;top:213.5px" width="19" height="19" viewBox="0 0 24 24"><rect x="1.500" y="1.500" width="19" height="19" fill="#e4d4d0" stroke="#d05048" stroke-width="1.300"/><path d="M9 3V19M3 9H20" stroke="#a02818" stroke-width="1.100"/><circle cx="9" cy="9" r="3" fill="none" stroke="#801808" stroke-width="1"/><path d="M11 11H22L18 16V23L15 21V16Z" fill="#f8c820" stroke="#a07800" stroke-width=".5"/></svg>
<i class="dd" style="left:363.0px;top:221.5px"></i>
<svg style="left:375.0px;top:215.0px" width="16" height="16" viewBox="0 0 24 24"><path d="M6 13H14C21 13 21 4 15 3" fill="none" stroke="#1a88a8" stroke-width="4"/><path d="M0 13L10 5V21Z" fill="#1a88a8"/></svg>
<svg style="left:397.0px;top:214.0px" width="18" height="18" viewBox="0 0 24 24"><path d="M2 13L7 5L21 7L22 16L16 22L3 20Z" fill="#f4f6fa" stroke="#2a3a8a" stroke-width="1.100"/><path d="M2 13L16 15L21 7M16 15V22" fill="none" stroke="#2a3a8a" stroke-width="1"/><path d="M8 8L17 10" stroke="#e02818" stroke-width="1.600"/></svg>
<svg style="left:420.0px;top:214.0px" width="18" height="18" viewBox="0 0 24 24"><circle cx="14" cy="15" r="4.500" fill="none" stroke="#b09890" stroke-width="1.500"/><path d="M14 7V23M6 15H22" stroke="#b09890" stroke-width="1.300"/><path d="M4 8C4 2 11 1 12 6" fill="none" stroke="#a8a8a4" stroke-width="1.800"/><path d="M1 6l3 4l3 -4z" fill="#a8a8a4"/></svg>
<svg style="left:444.0px;top:214.5px" width="17" height="17" viewBox="0 0 24 24"><path d="M3 4c3 -3 6 0 8 0s4 -1 5 1s-1 4 -3 4s-4 2 -7 1s-5 -4 -3 -6z" fill="#a8a8a4"/><path d="M12 8h4v12" fill="none" stroke="#a8a8a4" stroke-width="2"/><rect x="15" y="12" width="6" height="10" fill="#b4b0a4" stroke="#9a9a94" stroke-width=".6"/></svg>
<i class="sep" style="left:466.0px;top:212px;height:23px"></i>
<svg style="left:472.0px;top:213.5px" width="19" height="19" viewBox="0 0 24 24"><rect x="3" y="5" width="18" height="15" fill="none" stroke="#111" stroke-width="1.4" stroke-dasharray="3 2"/><circle cx="3" cy="5" r="1.6" fill="#e02010"/><circle cx="21" cy="20" r="1.6" fill="#e02010"/></svg>
<i class="dd" style="left:497.0px;top:221.5px"></i>
<i class="sep" style="left:507.0px;top:212px;height:23px"></i>
<div class="fr" style="left:511px;top:212px;width:22px;height:22px"></div>
<svg style="left:514.0px;top:215.0px" width="16" height="16" viewBox="0 0 24 24"><path d="M12 3L21 12L12 21L3 12Z" fill="none" stroke="#111" stroke-width="1.100"/><path d="M8 4L16 20M16 4L8 20M4 8L20 16M4 16L20 8" stroke="#666" stroke-width=".6"/><circle cx="12" cy="12" r="3" fill="#f8d820" stroke="#a08000" stroke-width=".5"/><circle cx="12" cy="4" r="1.300" fill="#111"/><circle cx="12" cy="20" r="1.300" fill="#111"/><circle cx="20" cy="12" r="1.300" fill="#111"/><path d="M0 3L5 7L0 11Z" fill="#18a838"/><path d="M0 13L5 17L0 21Z" fill="#e02818"/></svg>
<svg style="left:536.0px;top:214.5px" width="17" height="17" viewBox="0 0 24 24"><path d="M12 2L21 11L12 20L3 11Z" fill="none" stroke="#111" stroke-width="1"/><path d="M4 3L20 19M20 3L4 19" stroke="#666" stroke-width=".7"/><circle cx="12" cy="11" r="3.500" fill="#f8d820" stroke="#a08000" stroke-width=".5"/><circle cx="12" cy="3" r="1.500" fill="#111"/><circle cx="4" cy="11" r="1.500" fill="#111"/><circle cx="20" cy="11" r="1.500" fill="#111"/><path d="M12 17H20C25 17 25 23 19 23" fill="none" stroke="#1a78c8" stroke-width="2.600"/><path d="M8 17L14 13V21Z" fill="#1a78c8"/></svg>
<div class="fr" style="left:557px;top:212px;width:22px;height:22px"></div>
<svg style="left:560.0px;top:215.0px" width="16" height="16" viewBox="0 0 24 24"><path d="M4 20L20 4" stroke="#111" stroke-width="1.3"/><circle cx="20" cy="4" r="1.8" fill="#e02010"/></svg>
<div class="fr" style="left:580px;top:212px;width:22px;height:22px"></div>
<svg style="left:583.0px;top:215.0px" width="16" height="16" viewBox="0 0 24 24"><path d="M4 20L20 4" stroke="#111" stroke-width="1.3"/><circle cx="12" cy="12" r="1.8" fill="#e02010"/></svg>
<svg style="left:606.0px;top:215.0px" width="16" height="16" viewBox="0 0 24 24"><path d="M4 3C12 3 10 20 20 20" fill="none" stroke="#111" stroke-width="1.4"/><circle cx="11" cy="11" r="1.8" fill="#e02010"/></svg>
<svg style="left:629.0px;top:214.5px" width="17" height="17" viewBox="0 0 24 24"><path d="M12 2V22M2 16C6 8 18 8 22 16" fill="none" stroke="#111" stroke-width="1.3"/><circle cx="12" cy="10" r="1.8" fill="#e02010"/></svg>
<div class="fr" style="left:650px;top:212px;width:22px;height:22px"></div>
<svg style="left:653.0px;top:215.0px" width="16" height="16" viewBox="0 0 24 24"><circle cx="12" cy="12" r="8.5" fill="none" stroke="#111" stroke-width="1.3"/><circle cx="12" cy="12" r="1.8" fill="#e02010"/></svg>
<svg style="left:674.0px;top:214.0px" width="18" height="18" viewBox="0 0 24 24"><circle cx="12" cy="12" r="8" fill="none" stroke="#e02010" stroke-width="1.6"/><path d="M12 1l3 3l-3 3l-3 -3zM12 17l3 3l-3 3l-3 -3zM4 9l3 3l-3 3l-3 -3zM20 9l3 3l-3 3l-3 -3z" fill="#e02010"/></svg>
<div class="fr" style="left:695px;top:212px;width:22px;height:22px"></div>
<svg style="left:698.0px;top:215.0px" width="16" height="16" viewBox="0 0 24 24"><path d="M12 4V20M4 12H20" stroke="#111" stroke-width="1.3"/><circle cx="12" cy="12" r="1.6" fill="#e02010"/></svg>
<div class="fr" style="left:718px;top:212px;width:22px;height:22px"></div>
<svg style="left:721.0px;top:215.0px" width="16" height="16" viewBox="0 0 24 24"><path d="M4 20L20 4" stroke="#111" stroke-width="1.3"/><circle cx="8" cy="16" r="1.8" fill="#e02010"/></svg>
<svg style="left:743.0px;top:214.5px" width="17" height="17" viewBox="0 0 24 24"><path d="M2 6C10 2 18 4 22 8C16 10 12 16 12 22C6 20 2 14 2 6Z" fill="url(#gB)" stroke="#2a50c0" stroke-width=".8"/><circle cx="13" cy="9" r="2.6" fill="#e02010"/></svg>
<i class="sep" style="left:766.0px;top:212px;height:23px"></i>
<svg style="left:772.0px;top:214.0px" width="18" height="18" viewBox="0 0 24 24"><path d="M12 3L21 7L12 11L3 7Z" fill="url(#gW)" stroke="#2a70d0" stroke-width="0.6"/><path d="M3 7L12 11L12 21L3 17Z" fill="url(#gB)" stroke="#2a70d0" stroke-width="0.6"/><path d="M12 11L21 7L21 17L12 21Z" fill="#4a86e8" stroke="#2a70d0" stroke-width="0.6"/></svg>
<i class="dd" style="left:1013.0px;top:228.5px"></i>
<div id="status"><span style="left:466px">体(73)</span><i class="sdiv" style="left:462px"></i><i class="sdiv" style="left:986px"></i><i class="sdiv" style="left:1015px"></i><div class="sicon1"></div><div class="sicon2"><i></i></div></div>

<!-- panel -->
<div id="panel">
<div id="tabs"></div>
<div class="tab" style="top:17px;height:41px"></div>
<div class="tab" style="top:60px;height:39px"></div>
<div class="tab act" style="top:100px;height:43px"></div>
<div class="tab" style="top:144px;height:39px"></div>
<div class="tab" style="top:198px;height:39px"></div>
<div class="tab" style="top:252px;height:39px"></div>
<div class="tab" style="top:306px;height:39px"></div>
<div class="tab" style="top:348px;height:13px"></div>
<svg style="left:8px;top:23px" width="24" height="30" viewBox="0 0 24 30"><path d="M1 2.1L4.5 0L8 2.1L4.5 4.2Z" fill="#ffe870" stroke="#d09010" stroke-width=".5"/><path d="M1 2.1L4.5 4.2L4.5 7.700000000000001L1 5.6000000000000005Z" fill="#f8c020" stroke="#d09010" stroke-width=".5"/><path d="M4.5 4.2L8 2.1L8 5.6000000000000005L4.5 7.700000000000001Z" fill="#f0a810" stroke="#d09010" stroke-width=".5"/><path d="M6 6.1L9.5 4L13 6.1L9.5 8.2Z" fill="#ffe870" stroke="#d09010" stroke-width=".5"/><path d="M6 6.1L9.5 8.2L9.5 11.700000000000001L6 9.600000000000001Z" fill="#f8c020" stroke="#d09010" stroke-width=".5"/><path d="M9.5 8.2L13 6.1L13 9.600000000000001L9.5 11.700000000000001Z" fill="#f0a810" stroke="#d09010" stroke-width=".5"/><path d="M13 18.4L17.0 16L21 18.4L17.0 20.8Z" fill="#ffe870" stroke="#d09010" stroke-width=".5"/><path d="M13 18.4L17.0 20.8L17.0 24.8L13 22.4Z" fill="#f8c020" stroke="#d09010" stroke-width=".5"/><path d="M17.0 20.8L21 18.4L21 22.4L17.0 24.8Z" fill="#f0a810" stroke="#d09010" stroke-width=".5"/><path d="M5 12V29M5 21H11" stroke="#1a2aa0" stroke-width="1.3" fill="none"/><path d="M15 13H23" stroke="#111" stroke-width="1.3"/></svg>
<svg style="left:9px;top:66px" width="22" height="26" viewBox="0 0 22 26"><path d="M1 1L9 7L1 13Z" fill="#1a20d0"/><path d="M21 1L13 7L21 13Z" fill="#1a20d0"/><path d="M11 0V26" stroke="#111" stroke-width="1" stroke-dasharray="3 1.5"/><rect x="1" y="16" width="8" height="8" fill="#f8e820" stroke="#555" stroke-width=".8"/><path d="M13 14L13 24L22 24Z" fill="#e82010" stroke="#801000" stroke-width=".6"/></svg>
<svg style="left:8px;top:107px" width="24" height="30" viewBox="0 0 24 30"><rect x="2" y="3" width="9" height="10" rx="3" fill="#f4d8f0" stroke="#904080" stroke-width="1.1"/><ellipse cx="6.500" cy="5" rx="4.500" ry="2" fill="#fff" stroke="#904080" stroke-width=".9"/><path d="M5 15V29M5 22H11" stroke="#1a2aa0" stroke-width="1.3" fill="none"/><path d="M14 12H22" stroke="#111" stroke-width="1.3"/><circle cx="17" cy="22" r="4.200" fill="#fff" stroke="#904080" stroke-width="1.2"/><circle cx="17" cy="22" r="1.500" fill="#904080"/></svg>
<svg style="left:7px;top:151px" width="26" height="26" viewBox="0 0 26 26"><path d="M1 8L5 5L9 8L9 25L1 25Z" fill="#f89020" stroke="#b05808" stroke-width=".7"/><path d="M9 7L12 4L16 7L16 25L9 25Z" fill="#30b030" stroke="#107010" stroke-width=".7"/><path d="M16 6L20 3L25 5L25 22L21 25L16 25Z" fill="#3080e8" stroke="#1040a0" stroke-width=".7"/><path d="M3 10V23M11 9V23" stroke="#fff" stroke-opacity=".5" stroke-width="1"/></svg>
<svg style="left:7px;top:201px" width="26" height="32" viewBox="0 0 26 32"><path d="M10 2C18 2 24 8 24 16M10 7C15 7 19 11 19 16M10 12C13 12 14 14 14 16" fill="none" stroke="#2a60d8" stroke-width="2.600"/><circle cx="9" cy="20" r="8" fill="url(#gGl)" stroke="#123a9a" stroke-width=".8"/><rect x="7.800" y="18" width="2.600" height="7" fill="#fff"/><circle cx="9" cy="15.500" r="1.500" fill="#fff"/></svg>
<svg style="left:10px;top:258px" width="20" height="27" viewBox="0 0 20 27"><path d="M1 1L13 1L19 7L19 26L1 26Z" fill="#f4f8ff" stroke="#3a60c0" stroke-width="1.100"/><path d="M13 1V7H19" fill="none" stroke="#3a60c0" stroke-width="1"/><circle cx="10" cy="16" r="6" fill="url(#gGl)"/><path d="M6 15C8 12 11 13 12 15C11 18 8 19 6 15Z" fill="#30a840"/></svg>
<svg style="left:7px;top:311px" width="26" height="28" viewBox="0 0 26 28"><circle cx="13" cy="14" r="11.500" fill="#dce8f8" stroke="#555" stroke-width="1.500"/><circle cx="13" cy="14" r="9" fill="#fff" stroke="#9ab" stroke-width=".8"/><path d="M13 7V14H18" fill="none" stroke="#111" stroke-width="1.600"/><path d="M13 4v2M13 22v2M3 14h2M21 14h2" stroke="#2a50c0" stroke-width="1.200"/></svg>
<div class="nb" style="top:365px"><svg style="left:0;top:1px" width="12" height="11" viewBox="0 0 12 11" fill="#b4b4b4" stroke="#b4b4b4" stroke-width="1.200"><path d="M2 2H10M6 3L2 8H10Z" /></svg></div>
<div class="nb" style="top:381px"><svg style="left:0;top:1px" width="12" height="11" viewBox="0 0 12 11" fill="#b4b4b4" stroke="#b4b4b4" stroke-width="1.200"><path d="M6 2L1.5 8H10.500Z"/></svg></div>
<div class="nb" style="top:397px"><svg style="left:0;top:1px" width="12" height="11" viewBox="0 0 12 11" fill="#555" stroke="#555" stroke-width="1.200"><path d="M6 9L1.500 3H10.500Z"/></svg></div>
<div class="nb" style="top:413px"><svg style="left:0;top:1px" width="12" height="11" viewBox="0 0 12 11" fill="#555" stroke="#555" stroke-width="1.200"><path d="M2 9H10M6 8L2 3H10Z"/></svg></div>
<div id="pbody">
<svg style="left:15px;top:12px" width="13" height="12" viewBox="0 0 13 12"><path d="M1 11L4 7" stroke="#111" stroke-width="1.300"/><ellipse cx="7.500" cy="5" rx="4.500" ry="3.600" transform="rotate(-30 7.500 5)" fill="#f4e8a0" stroke="#111" stroke-width="1.300"/></svg>
<span id="ptitle">部件导航器</span>
<div id="tree">
<div id="thead"><span style="left:7px">名称</span><i class="up"></i><i class="cdiv"></i><span style="left:206px">附注</span></div>
<div class="row alt" style="top:20px"><i class="dots"></i><i class="ck"><svg style="left:0;top:0" width="10" height="10" viewBox="0 0 10 10"><path d="M1 5L4 8.500L9.500 1" fill="none" stroke="#18a028" stroke-width="2.400"/></svg></i><svg style="left:53.500px;top:2.500px" width="17" height="17" viewBox="0 0 17 17"><path d="M8 2H14M8 2V9M8 9H11" fill="none" stroke="#111" stroke-width="1.300"/><path d="M3 11L9 9L16 11L9 14Z" fill="#9cc0ff" stroke="#2a58c8" stroke-width=".6"/><path d="M3 11L9 14L9 17L3 14Z" fill="#5a90f0"/><path d="M9 14L16 11L16 14L9 17Z" fill="#2a60d8"/><rect x="8" y="6" width="5" height="6" rx="2" fill="#6aa0f8" stroke="#2a58c8" stroke-width=".5"/><circle cx="4.500" cy="5" r="3.800" fill="#fff" fill-opacity=".6" stroke="#e02020" stroke-width="1.400"/><path d="M2 7.500L7 2.500" stroke="#e02020" stroke-width="1.400"/></svg><span>体 (74)</span></div>
<div class="row" style="top:40px"><i class="dots"></i><i class="ck"><svg style="left:0;top:0" width="10" height="10" viewBox="0 0 10 10"><path d="M1 5L4 8.500L9.500 1" fill="none" stroke="#18a028" stroke-width="2.400"/></svg></i><svg style="left:53.500px;top:2.500px" width="17" height="17" viewBox="0 0 17 17"><path d="M8 2H14M8 2V9M8 9H11" fill="none" stroke="#111" stroke-width="1.300"/><path d="M3 11L9 9L16 11L9 14Z" fill="#9cc0ff" stroke="#2a58c8" stroke-width=".6"/><path d="M3 11L9 14L9 17L3 14Z" fill="#5a90f0"/><path d="M9 14L16 11L16 14L9 17Z" fill="#2a60d8"/><rect x="8" y="6" width="5" height="6" rx="2" fill="#6aa0f8" stroke="#2a58c8" stroke-width=".5"/><circle cx="4.500" cy="5" r="3.800" fill="#fff" fill-opacity=".6" stroke="#e02020" stroke-width="1.400"/><path d="M2 7.500L7 2.500" stroke="#e02020" stroke-width="1.400"/></svg><span>体 (75)</span></div>
<div class="row alt" style="top:60px"><i class="dots"></i><i class="ck"><svg style="left:0;top:0" width="10" height="10" viewBox="0 0 10 10"><path d="M1 5L4 8.500L9.500 1" fill="none" stroke="#18a028" stroke-width="2.400"/></svg></i><svg style="left:53.500px;top:2.500px" width="17" height="17" viewBox="0 0 17 17"><path d="M8 2H14M8 2V9M8 9H11" fill="none" stroke="#111" stroke-width="1.300"/><path d="M3 11L9 9L16 11L9 14Z" fill="#9cc0ff" stroke="#2a58c8" stroke-width=".6"/><path d="M3 11L9 14L9 17L3 14Z" fill="#5a90f0"/><path d="M9 14L16 11L16 14L9 17Z" fill="#2a60d8"/><rect x="8" y="6" width="5" height="6" rx="2" fill="#6aa0f8" stroke="#2a58c8" stroke-width=".5"/><circle cx="4.500" cy="5" r="3.800" fill="#fff" fill-opacity=".6" stroke="#e02020" stroke-width="1.400"/><path d="M2 7.500L7 2.500" stroke="#e02020" stroke-width="1.400"/></svg><span>体 (76)</span></div>
<div class="row" style="top:80px"><i class="dots"></i><i class="ck"><svg style="left:0;top:0" width="10" height="10" viewBox="0 0 10 10"><path d="M1 5L4 8.500L9.500 1" fill="none" stroke="#18a028" stroke-width="2.400"/></svg></i><svg style="left:53.500px;top:2.500px" width="17" height="17" viewBox="0 0 17 17"><path d="M8 2H14M8 2V9M8 9H11" fill="none" stroke="#111" stroke-width="1.300"/><path d="M3 11L9 9L16 11L9 14Z" fill="#9cc0ff" stroke="#2a58c8" stroke-width=".6"/><path d="M3 11L9 14L9 17L3 14Z" fill="#5a90f0"/><path d="M9 14L16 11L16 14L9 17Z" fill="#2a60d8"/><rect x="8" y="6" width="5" height="6" rx="2" fill="#6aa0f8" stroke="#2a58c8" stroke-width=".5"/><circle cx="4.500" cy="5" r="3.800" fill="#fff" fill-opacity=".6" stroke="#e02020" stroke-width="1.400"/><path d="M2 7.500L7 2.500" stroke="#e02020" stroke-width="1.400"/></svg><span>体 (77)</span></div>
<div class="row alt" style="top:100px"><i class="dots"></i><i class="ck"><svg style="left:0;top:0" width="10" height="10" viewBox="0 0 10 10"><path d="M1 5L4 8.500L9.500 1" fill="none" stroke="#18a028" stroke-width="2.400"/></svg></i><svg style="left:53.500px;top:2.500px" width="17" height="17" viewBox="0 0 17 17"><path d="M8 2H14M8 2V9M8 9H11" fill="none" stroke="#111" stroke-width="1.300"/><path d="M3 11L9 9L16 11L9 14Z" fill="#9cc0ff" stroke="#2a58c8" stroke-width=".6"/><path d="M3 11L9 14L9 17L3 14Z" fill="#5a90f0"/><path d="M9 14L16 11L16 14L9 17Z" fill="#2a60d8"/><rect x="8" y="6" width="5" height="6" rx="2" fill="#6aa0f8" stroke="#2a58c8" stroke-width=".5"/><circle cx="4.500" cy="5" r="3.800" fill="#fff" fill-opacity=".6" stroke="#e02020" stroke-width="1.400"/><path d="M2 7.500L7 2.500" stroke="#e02020" stroke-width="1.400"/></svg><span>体 (78)</span></div>
<div class="row" style="top:120px"><i class="dots"></i><i class="ck"><svg style="left:0;top:0" width="10" height="10" viewBox="0 0 10 10"><path d="M1 5L4 8.500L9.500 1" fill="none" stroke="#18a028" stroke-width="2.400"/></svg></i><svg style="left:53.500px;top:2.500px" width="17" height="17" viewBox="0 0 17 17"><path d="M8 2H14M8 2V9M8 9H11" fill="none" stroke="#111" stroke-width="1.300"/><path d="M3 11L9 9L16 11L9 14Z" fill="#9cc0ff" stroke="#2a58c8" stroke-width=".6"/><path d="M3 11L9 14L9 17L3 14Z" fill="#5a90f0"/><path d="M9 14L16 11L16 14L9 17Z" fill="#2a60d8"/><rect x="8" y="6" width="5" height="6" rx="2" fill="#6aa0f8" stroke="#2a58c8" stroke-width=".5"/><circle cx="4.500" cy="5" r="3.800" fill="#fff" fill-opacity=".6" stroke="#e02020" stroke-width="1.400"/><path d="M2 7.500L7 2.500" stroke="#e02020" stroke-width="1.400"/></svg><span>体 (79)</span></div>
<div class="row alt" style="top:140px"><i class="dots"></i><i class="ck"><svg style="left:0;top:0" width="10" height="10" viewBox="0 0 10 10"><path d="M1 5L4 8.500L9.500 1" fill="none" stroke="#18a028" stroke-width="2.400"/></svg></i><svg style="left:53.500px;top:2.500px" width="17" height="17" viewBox="0 0 17 17"><path d="M8 2H14M8 2V9M8 9H11" fill="none" stroke="#111" stroke-width="1.300"/><path d="M3 11L9 9L16 11L9 14Z" fill="#9cc0ff" stroke="#2a58c8" stroke-width=".6"/><path d="M3 11L9 14L9 17L3 14Z" fill="#5a90f0"/><path d="M9 14L16 11L16 14L9 17Z" fill="#2a60d8"/><rect x="8" y="6" width="5" height="6" rx="2" fill="#6aa0f8" stroke="#2a58c8" stroke-width=".5"/><circle cx="4.500" cy="5" r="3.800" fill="#fff" fill-opacity=".6" stroke="#e02020" stroke-width="1.400"/><path d="M2 7.500L7 2.500" stroke="#e02020" stroke-width="1.400"/></svg><span>体 (80)</span></div>
<div class="row dim" style="top:160px"><i class="dots"></i><i class="ck"><svg style="left:0;top:0" width="10" height="10" viewBox="0 0 10 10"><path d="M1 5L4 8.500L9.500 1" fill="none" stroke="#18a028" stroke-width="2.400"/></svg></i><svg style="left:53.500px;top:2.500px" width="17" height="17" viewBox="0 0 17 17"><path d="M8 2H14M8 2V9M8 9H11" fill="none" stroke="#111" stroke-width="1.300"/><path d="M3 11L9 9L16 11L9 14Z" fill="#9cc0ff" stroke="#2a58c8" stroke-width=".6"/><path d="M3 11L9 14L9 17L3 14Z" fill="#5a90f0"/><path d="M9 14L16 11L16 14L9 17Z" fill="#2a60d8"/><rect x="8" y="6" width="5" height="6" rx="2" fill="#6aa0f8" stroke="#2a58c8" stroke-width=".5"/><circle cx="4.500" cy="5" r="3.800" fill="#fff" fill-opacity=".6" stroke="#e02020" stroke-width="1.400"/><path d="M2 7.500L7 2.500" stroke="#e02020" stroke-width="1.400"/></svg><span>体 (81)</span></div>
<div class="row alt" style="top:180px"><i class="dots"></i><i class="ck"><svg style="left:0;top:0" width="10" height="10" viewBox="0 0 10 10"><path d="M1 5L4 8.500L9.500 1" fill="none" stroke="#18a028" stroke-width="2.400"/></svg></i><svg style="left:53.500px;top:2.500px" width="17" height="17" viewBox="0 0 17 17"><path d="M8 2H14M8 2V9M8 9H11" fill="none" stroke="#111" stroke-width="1.300"/><path d="M3 11L9 9L16 11L9 14Z" fill="#9cc0ff" stroke="#2a58c8" stroke-width=".6"/><path d="M3 11L9 14L9 17L3 14Z" fill="#5a90f0"/><path d="M9 14L16 11L16 14L9 17Z" fill="#2a60d8"/><rect x="8" y="6" width="5" height="6" rx="2" fill="#6aa0f8" stroke="#2a58c8" stroke-width=".5"/><circle cx="4.500" cy="5" r="3.800" fill="#fff" fill-opacity=".6" stroke="#e02020" stroke-width="1.400"/><path d="M2 7.500L7 2.500" stroke="#e02020" stroke-width="1.400"/></svg><span>体 (82)</span></div>
<div class="row" style="top:200px"><i class="dots"></i><i class="ck"><svg style="left:0;top:0" width="10" height="10" viewBox="0 0 10 10"><path d="M1 5L4 8.500L9.500 1" fill="none" stroke="#18a028" stroke-width="2.400"/></svg></i><svg style="left:53.500px;top:2.500px" width="17" height="17" viewBox="0 0 17 17"><path d="M8 2H14M8 2V9M8 9H11" fill="none" stroke="#111" stroke-width="1.300"/><path d="M3 11L9 9L16 11L9 14Z" fill="#9cc0ff" stroke="#2a58c8" stroke-width=".6"/><path d="M3 11L9 14L9 17L3 14Z" fill="#5a90f0"/><path d="M9 14L16 11L16 14L9 17Z" fill="#2a60d8"/><rect x="8" y="6" width="5" height="6" rx="2" fill="#6aa0f8" stroke="#2a58c8" stroke-width=".5"/><circle cx="4.500" cy="5" r="3.800" fill="#fff" fill-opacity=".6" stroke="#e02020" stroke-width="1.400"/><path d="M2 7.500L7 2.500" stroke="#e02020" stroke-width="1.400"/></svg><span>体 (83)</span></div>
<div class="row alt" style="top:220px"><i class="dots"></i><i class="ck"><svg style="left:0;top:0" width="10" height="10" viewBox="0 0 10 10"><path d="M1 5L4 8.500L9.500 1" fill="none" stroke="#18a028" stroke-width="2.400"/></svg></i><svg style="left:53.500px;top:2.500px" width="17" height="17" viewBox="0 0 17 17"><path d="M8 2H14M8 2V9M8 9H11" fill="none" stroke="#111" stroke-width="1.300"/><path d="M3 11L9 9L16 11L9 14Z" fill="#9cc0ff" stroke="#2a58c8" stroke-width=".6"/><path d="M3 11L9 14L9 17L3 14Z" fill="#5a90f0"/><path d="M9 14L16 11L16 14L9 17Z" fill="#2a60d8"/><rect x="8" y="6" width="5" height="6" rx="2" fill="#6aa0f8" stroke="#2a58c8" stroke-width=".5"/><circle cx="4.500" cy="5" r="3.800" fill="#fff" fill-opacity=".6" stroke="#e02020" stroke-width="1.400"/><path d="M2 7.500L7 2.500" stroke="#e02020" stroke-width="1.400"/></svg><span>体 (84)</span></div>
<div class="row" style="top:240px"><i class="dots"></i><i class="ck"><svg style="left:0;top:0" width="10" height="10" viewBox="0 0 10 10"><path d="M1 5L4 8.500L9.500 1" fill="none" stroke="#18a028" stroke-width="2.400"/></svg></i><svg style="left:53.500px;top:2.500px" width="17" height="17" viewBox="0 0 17 17"><path d="M8 2H14M8 2V9M8 9H11" fill="none" stroke="#111" stroke-width="1.300"/><path d="M3 11L9 9L16 11L9 14Z" fill="#9cc0ff" stroke="#2a58c8" stroke-width=".6"/><path d="M3 11L9 14L9 17L3 14Z" fill="#5a90f0"/><path d="M9 14L16 11L16 14L9 17Z" fill="#2a60d8"/><rect x="8" y="6" width="5" height="6" rx="2" fill="#6aa0f8" stroke="#2a58c8" stroke-width=".5"/><circle cx="4.500" cy="5" r="3.800" fill="#fff" fill-opacity=".6" stroke="#e02020" stroke-width="1.400"/><path d="M2 7.500L7 2.500" stroke="#e02020" stroke-width="1.400"/></svg><span>体 (85)</span></div>
<div class="row alt" style="top:260px"><i class="dots"></i><i class="ck"><svg style="left:0;top:0" width="10" height="10" viewBox="0 0 10 10"><path d="M1 5L4 8.500L9.500 1" fill="none" stroke="#18a028" stroke-width="2.400"/></svg></i><svg style="left:53.500px;top:2.500px" width="17" height="17" viewBox="0 0 24 24"><path d="M2 6C5 2 9 4 10 5C13 3 18 3 20 6L20 19C16 22 6 22 2 19Z" fill="url(#gO2)" stroke="#d86808" stroke-width="1"/><path d="M8 5V20M12 5V21" stroke="#d86808" stroke-width="1"/><path d="M2 19C6 22 16 22 20 19L20 22C16 25 6 25 2 22Z" fill="#3a70e0"/></svg><span>拉伸 (86)</span></div>
<div class="row" style="top:280px"><i class="dots"></i><i class="ck"><svg style="left:0;top:0" width="10" height="10" viewBox="0 0 10 10"><path d="M1 5L4 8.500L9.500 1" fill="none" stroke="#18a028" stroke-width="2.400"/></svg></i><svg style="left:53.500px;top:2.500px" width="17" height="17" viewBox="0 0 17 17"><path d="M8 2H14M8 2V9M8 9H11" fill="none" stroke="#111" stroke-width="1.300"/><path d="M3 11L9 9L16 11L9 14Z" fill="#9cc0ff" stroke="#2a58c8" stroke-width=".6"/><path d="M3 11L9 14L9 17L3 14Z" fill="#5a90f0"/><path d="M9 14L16 11L16 14L9 17Z" fill="#2a60d8"/><rect x="8" y="6" width="5" height="6" rx="2" fill="#6aa0f8" stroke="#2a58c8" stroke-width=".5"/><circle cx="4.500" cy="5" r="3.800" fill="#fff" fill-opacity=".6" stroke="#e02020" stroke-width="1.400"/><path d="M2 7.500L7 2.500" stroke="#e02020" stroke-width="1.400"/></svg><span>体 (87)</span></div>
<i class="vdots"></i><i class="cdiv2"></i>
<div id="vsb"><i class="sa" style="top:7px;border-bottom:4px solid #333"></i><div class="thumb" style="left:0;top:200px;width:15px;height:32px"><i class="gr"></i></div><i class="sa" style="top:261px;border-top:4px solid #333"></i></div>
<div id="hsb"><i class="sh" style="left:7px;border-right:4px solid #333"></i><div class="thumb" style="left:19px;top:0;width:126px;height:14px"><i class="gr2"></i></div><i class="sh" style="left:205px;border-left:4px solid #333"></i></div>
</div>
<div id="split"><i style="left:0;width:92px"></i><b></b><i style="left:141px;width:93px"></i></div>
<div class="sec" style="top:359px"><span>相依性</span><b><svg style="left:5px;top:5px" width="12" height="10" viewBox="0 0 12 10"><path d="M1 1L6 8L11 1" fill="none" stroke="#333" stroke-width="2"/></svg></b></div>
<div class="sec" style="top:382px"><span>细节</span><b><svg style="left:5px;top:5px" width="12" height="10" viewBox="0 0 12 10"><path d="M1 1L6 8L11 1" fill="none" stroke="#333" stroke-width="2"/></svg></b></div>
<div class="sec" style="top:405px"><span>预览</span><b><svg style="left:5px;top:5px" width="12" height="10" viewBox="0 0 12 10"><path d="M1 1L6 8L11 1" fill="none" stroke="#333" stroke-width="2"/></svg></b></div>
</div></div>

<!-- viewport -->
<div id="vp">
<svg style="left:0;top:0" width="701" height="432" viewBox="460 261 701 432">
<defs>
<linearGradient id="bl5" x1="0" y1="1" x2="1" y2="0"><stop offset="0" stop-color="#9c9c9c"/><stop offset=".45" stop-color="#c4c4c4"/><stop offset="1" stop-color="#e6e6e6"/></linearGradient>
<linearGradient id="bl4" x1="0" y1="0" x2=".75" y2="1"><stop offset="0" stop-color="#8e8e8e"/><stop offset=".3" stop-color="#b6b6b6"/><stop offset=".65" stop-color="#dadada"/><stop offset="1" stop-color="#f2f2f2"/></linearGradient>
<linearGradient id="ysh" x1="0" y1="0" x2="1" y2="0"><stop offset="0" stop-color="#fff000"/><stop offset="1" stop-color="#b8a400"/></linearGradient>
<linearGradient id="ysh2" x1="0" y1="0" x2="0" y2="1"><stop offset="0" stop-color="#fff000"/><stop offset="1" stop-color="#9c8c00"/></linearGradient>
<filter id="bl2" x="-20%" y="-50%" width="140%" height="200%"><feGaussianBlur stdDeviation="2"/></filter><filter id="bl1" x="-20%" y="-50%" width="140%" height="200%"><feGaussianBlur stdDeviation="1.100"/></filter>
<clipPath id="cpv"><rect x="460" y="261" width="701" height="432"/></clipPath>
</defs>
<g clip-path="url(#cpv)">
<!-- background lines behind model -->
<path d="M462 299.500L597 320" stroke="#222" stroke-width="2"/>
<path d="M830 261L837 300" stroke="#222" stroke-width="1.200"/>
<path d="M1049 453L918 521" stroke="#222" stroke-width="1.200"/>
<path d="M543.600 543L477.300 669.300" stroke="#222" stroke-width="1.700"/>
<path d="M725 655L770 694" stroke="#222" stroke-width="1.800"/>
<!-- outer ring -->
<ellipse cx="727.200" cy="465.800" rx="199.300" ry="195.200" fill="#ffee00" stroke="#14da18" stroke-width="2" transform="rotate(-21.400 727.200 465.800)"/>
<!-- inner ring brown edge + green -->
<ellipse cx="726.500" cy="466.200" rx="185.700" ry="180.800" fill="#6e4a10" transform="rotate(-21 726.500 466.200)"/>
<ellipse cx="728.300" cy="469.300" rx="184.500" ry="179.600" fill="#ffee00" transform="rotate(-21 728.300 469.300)"/>
<ellipse cx="726.500" cy="466.200" rx="185.700" ry="180.800" fill="none" stroke="#12d41a" stroke-width="2" transform="rotate(-21 726.500 466.200)"/>
<!-- mesh lines on yellow -->
<path d="M587 355L612 429L596.500 441.700L574.600 373Z" fill="#fff336"/>
<path d="M670.400 300L680.800 300L691.300 327L683 335.400Z" fill="#ffd21c"/>
<g stroke="#2a2600" stroke-width=".9" fill="none">
<path d="M622.500 322L654 327"/>
<path d="M670.400 300L683 335.400"/><path d="M680.800 300L691.300 327"/>
<path d="M700 331.300L755.400 291"/><path d="M718 337.300L777.800 295.400"/><path d="M737.400 344.800L795.800 304.400"/>
<path d="M683 339.600L612 429.200"/><path d="M587 355.200L612 429.200"/><path d="M574.600 373L596.500 441.700"/><path d="M563 391.700L585 460"/>
<path d="M586.800 477L554 535.400"/><path d="M564.400 499.400L555.400 534"/><path d="M586.800 477L649.700 567"/>
<path d="M573.500 569L649.600 568"/><path d="M587 586.700L656 586.300"/><path d="M604.800 603.300L674.600 602.300"/><path d="M649.600 568L674.600 601.300"/>
<path d="M687.700 602.700L796 573"/><path d="M687.700 604L732.400 647.400"/><path d="M793.300 578.300L774.400 639.300"/><path d="M816.400 574.300L796 632.500"/><path d="M836.700 563.400L817.700 621.700"/>
<path d="M844.800 547.200L849 470L846.700 386.700"/><path d="M844.800 546L902 521"/><path d="M862 535L880 528" stroke-width=".6"/>
<path d="M849.700 395.700L906.600 431.600"/><path d="M852.700 410.700L909.600 452.600"/><path d="M848.200 437.600L909.600 476.600"/>
<path d="M830.200 316.400L840.700 380.700"/><path d="M836.200 319.400L845.200 350.800"/>
<path d="M687.700 486.300C665 498 650 525 650 551C650 558 651 563 651 567.500"/>
<path d="M724.300 524.200C735 548 765 566 796 573C815 572 830 566 844 548"/>
<path d="M772 484C800 490 830 470 849 440"/>
</g>
<!-- orange spokes -->
<path d="M545.500 464.500L583 463L584 474.500L546 477Z" fill="#ffbe0a"/>
<path d="M675.500 608L685 608.500L675.500 640.600L666 638Z" fill="#ffc014"/>
<path d="M842 383L877 358L884 366L850 392Z" fill="#ff9c0a"/>
<path d="M845.300 556.300L850.200 550L876.500 570.200L871.100 577Z" fill="#ff9c0a"/>
<!-- shading on yellow -->
<radialGradient id="glare" cx="50%" cy="50%" r="50%"><stop offset="0" stop-color="#fff86a" stop-opacity=".8"/><stop offset="1" stop-color="#ffee00" stop-opacity="0"/></radialGradient>
<ellipse cx="722" cy="548" rx="26" ry="34" fill="url(#glare)"/>
<linearGradient id="shd" x1="0" y1="0" x2="0" y2="1"><stop offset="0" stop-color="#8a7c00"/><stop offset="1" stop-color="#ffee00" stop-opacity="0"/></linearGradient>
<path d="M640 476L703 479L700 490C682 486 662 484 640 482Z" fill="#8a7c00" opacity=".75" filter="url(#bl2)"/>
<!-- blade 1 thickness shade (right of upper blade) -->
<path d="M697 334L708 335.600L735 347C752 372 762 399 766 418C767 426 766 430 764 434L754 437C759 428 759 412 753 398C745 378 725 352 697 334Z" fill="url(#ysh)"/>
<!-- blade 2 shade above -->
<path d="M640 428C660 424 680 424 694 428C702 432 706 438 708 444L696 440C680 433 660 432 640 435Z" fill="#7a6e00" opacity=".8" filter="url(#bl1)"/><path d="M612 440C630 432 650 428 668 428L668 433C650 433 630 438 612 446Z" fill="#b8a800" opacity=".7" filter="url(#bl1)"/>
<!-- red face -->
<linearGradient id="redg" x1="0" y1="0" x2="1" y2=".2"><stop offset="0" stop-color="#d85a44"/><stop offset=".25" stop-color="#f07258"/><stop offset="1" stop-color="#ff8a6e"/></linearGradient>
<path d="M735 347.100L841.300 382.500C825 392 812 400 801.700 407.500C790 415 776 425 764.200 433.500C768 418 764 398 751.700 372C747 362 741 354 735 347.100Z" fill="url(#redg)"/>
<!-- blade 5 (right-up, gray) -->
<path d="M745.400 445C752 441 758 437 764.200 433.500C776 425 790 415 801.700 407.500C812 400 825 392 841.300 382.500C846 384 850 387 850.600 391C851 400 850 408 847.500 418C845 428 842 437 837 445C832 455 826 463 818.300 470C812 475 805 478 797.500 480C785 484 770 484 757 478Z" fill="url(#bl5)" stroke="#222" stroke-width="1"/>
<path d="M843.300 386.700C845 392 845 398 844.400 403.300C843 412 842 420 839.200 428.300C836 438 831 447 824.600 455.400C819 463 813 469 805.800 474.200C795 480 780 481 765 478" fill="none" stroke="#333" stroke-width=".7"/>
<path d="M751.700 443L768 480M796.500 418L796.500 482" stroke="#333" stroke-width=".6" fill="none"/>
<path d="M745.400 445C776 425 812 400 841.300 382.500" stroke="#222" stroke-width="1.300" fill="none"/>
<!-- blade 4 (bottom-right, gray) -->
<path d="M750 482C758 486 768 491 777.100 497C784 502 790 508 796 513.300C804 519 812 525 820.400 531C828 537 836 543 844.800 548.500C846.500 550 846.500 552 846.200 552.600C843 556 840 559 836.700 560.700C830 563 822 564.500 815 564.800C806 565 797 564 788 562C779 560 769 556 760.800 551.300C753 546 747 540 741.900 532.300C738 526 735 520 733.800 513.300C732.500 508 732.300 504 732.400 499.800Z" fill="url(#bl4)" stroke="#222" stroke-width="1"/>
<path d="M739.200 517.400C742 524 746 530 750 535C755 540 760 545 766.300 548.500C775 553 784 556 793.300 558C802 559.500 811 560 820.400 559.400C827 558.500 833 557 839.400 554" fill="none" stroke="#333" stroke-width=".7"/>
<path d="M755.400 486.300L736.500 518.800" stroke="#333" stroke-width=".6"/>
<path d="M755.400 483.500C777 497 810 523 844.800 548.500" stroke="#222" stroke-width="1.200" fill="none"/>
<!-- blade 3 (bottom, white) -->
<path d="M700 489C690 493 680 500 671.500 510.600C665 522 662 534 662 545.800C662 557 663 568 666 578.300C668 586 671 594 675.500 600C677 603 679 605.500 681 606.800C683 607 685 606 686.400 604L687.700 602.700C690 592 693 582 697.200 573C700 564 703 556 706.700 548.500C710 540 714 532 718.900 524.200C723 516 727 509 731 502.500L733 498Z" fill="#fdfdfb" stroke="#222" stroke-width="1"/>
<path d="M698.500 497C690 501 683 507 676.900 513.300C671 523 668 534 668.200 545.800C668 557 669 568 671.500 578.300C673 585 675 592 678.200 597.300" fill="none" stroke="#444" stroke-width=".7"/>
<path d="M698 492L726 506" fill="none" stroke="#666" stroke-width=".6"/>
<!-- blade 2 (left, white) -->
<path d="M703.800 444.800C701 442 698 441 695.400 439.600C689 436 682 434 674.600 433.300C664 432.500 654 433 643.300 434.400C632 436 622 440 612 444.800C602 450 593 456 586 461.500C583 464 582 466 581.900 468.800C582 472 584 474 586 475C598 474.500 610 474 622.500 474C633 474 643 474.500 653.800 475C661 475.500 669 476 676.700 477L701.700 478Z" fill="#fdfdfb" stroke="#222" stroke-width="1"/>
<path d="M589.200 462.500C597 457 605 453 614.200 449C624 444 633 441 643.300 438.500C654 437 664 437 674.600 437.500C683 439 691 441 697.500 444.800" fill="none" stroke="#444" stroke-width=".7"/>
<path d="M698.500 446.900L691.300 477" stroke="#444" stroke-width=".6"/>
<!-- blade 1 (upper, white) -->
<path d="M710 443C707 432 704 421 701.700 409.600C698 397 694 384 691.300 372C688 359 685 347 682.900 335.600C684 333 687 332.500 691.300 332.900C694 333 697 334 699.600 335.600C708 340 716 346 722.500 353.300C730 361 737 370 743.300 380.400C748 388 751 396 753.800 403.300C756 410 757.500 417 757.900 424.200C758 429 756 433 753.800 436.700L745.400 445Z" fill="#fdfdfb" stroke="#222" stroke-width="1"/>
<path d="M694.400 338.800C704 343 713 350 720.400 357.500C728 365 734 373 739.200 382.500C744 390 747 398 749.600 405.400C752 412 753 418 752.700 424.200C752.500 430 751 434 749.600 438.800" fill="none" stroke="#444" stroke-width=".7"/>
<path d="M683.500 340L694 338L699 335.500" fill="none" stroke="#444" stroke-width=".6"/>
<!-- magenta curves -->
<g fill="none" stroke="#ff28e4" stroke-width="1.300">
<path d="M682.900 338C686 352 690 368 694 384C697 396 700 408 705.800 420.800C708 428 710 433 714 441.700"/>
<path d="M575.600 450C587 440 600 430 612 423C624 417 636 414 647.500 412.500C657 411.500 667 412 676.700 413.500C685 415 692 418 697.500 420.800C703 426 707 432 710 437.500L714 441.700"/>
<path d="M584 456C593 448 602 440 612 433.300C622 428 633 425 643.300 423C653 421.500 663 421.500 672.500 421.900C681 423 689 426 695.400 429C700 433 705 438 708 443.800"/>
<path d="M585 461.500C594 453 603 446 612 440.600C622 436 633 433 643.300 431.300C653 430.500 663 430.500 672.500 431.300C681 432 689 434 695.400 436.500L705.800 444.800"/>
</g>
<!-- hub -->
<path d="M700.500 472A27 27 0 0 0 752 478L755 484A30 30 0 0 1 702 482Z" fill="#5a5a5a" stroke="#333" stroke-width=".8"/>
<circle cx="727" cy="466.500" r="27" fill="#fdfdfd" stroke="#333" stroke-width="1.600"/>

<circle cx="727" cy="466.500" r="12" fill="#6e6e6e" stroke="#222" stroke-width="1.600"/>
<path d="M722 456L727 466L719 464Z" fill="#1030c0"/>
<path d="M727 458V474M720 466H735" stroke="#f09030" stroke-width="2"/>
<!-- green construction lines -->
<g stroke="#12d41a" stroke-width="1.800" fill="none">
<path d="M658.500 261L723 453L727 465"/>
<path d="M460 577L727 465"/>
<path d="M460 590L548 560"/>
</g>
<!-- axes -->
<path d="M727 466L762 482" stroke="#10a028" stroke-width="2.200"/><path d="M758 477L775 489L757 484Z" fill="#108a28"/>
<path d="M727 466L718.500 493L702.500 515L711.500 489Z" fill="#e23a26"/>
<text x="723" y="456" font-size="11" fill="#1848d0" font-family="Liberation Sans,sans-serif">ZC</text>
<text x="758" y="506" font-size="11" fill="#208a30" font-family="Liberation Sans,sans-serif">YC</text>
<text x="706" y="530" font-size="11" fill="#e04030" font-family="Liberation Sans,sans-serif">X<tspan fill="#f09030">C</tspan></text>
<!-- crosshair -->
<g stroke="#1a1a1a" stroke-width="1.100">
<path d="M460 380.500H764M829 380.500H1161"/>
<path d="M796.500 261V348M796.500 394V693"/>
</g>
<circle cx="796.500" cy="380.500" r="14.500" fill="none" stroke="#fff" stroke-width="2.200"/>
<circle cx="796.500" cy="380.500" r="14.500" fill="none" stroke="#222" stroke-width="1"/>
<path d="M796.500 366V395M782 380.500H811" stroke="#222" stroke-width="3.200"/>
<path d="M796.500 367V394M783 380.500H810" stroke="#fff" stroke-width="1.600"/>
<!-- tooltip -->
<rect x="782.500" y="402" width="47" height="22" rx="5" fill="#ececec" fill-opacity=".92" stroke="#c8c8c8" stroke-width="1"/>
<text x="788" y="418" font-size="12.500" fill="#666" font-family="Liberation Sans,Noto Sans CJK SC,sans-serif">体(73)</text>
<!-- view triad -->
<path d="M492.800 659.300L499.200 647.500L513.800 654.800L508.300 670.300L494.600 665.700Z" fill="#c2c6c6" stroke="#9a9e9e" stroke-width="1"/>
<path d="M499.200 647.500L501 652L513 656.500M501 652L494.600 665.700" fill="none" stroke="#a8acac" stroke-width=".8"/>
<path d="M513.800 656.600L521 659.800" stroke="#2a8a3a" stroke-width="1.300"/><path d="M519.500 657.500L524.500 661.300L518.500 661.800Z" fill="#2a8a3a"/>
<path d="M493.500 664L489.500 670.500" stroke="#e8503c" stroke-width="2.400"/><path d="M489.500 669L487.500 673.500" stroke="#e8503c" stroke-width="1.200"/>
<path d="M498.500 648.500L497.500 645.500" stroke="#2050d0" stroke-width="2"/>
<text x="525.500" y="668.500" font-size="11" fill="#2a8a3a" font-family="Liberation Sans,sans-serif">Y</text>
<text x="481" y="683" font-size="11" fill="#e04a38" font-family="Liberation Sans,sans-serif">X</text>
<text x="494" y="646.500" font-size="10" font-style="italic" fill="#2050d0" font-family="Liberation Sans,sans-serif">Z</text>
</g>
</svg>
</div>

<!-- rightbar -->
<div id="rbar">
  <i class="hgrip" style="top:7px"></i>
  <i class="la" style="top:12px"></i>
  <i class="hgrip" style="top:31px"></i>
  <div class="rb" style="top:38px;border:none;background:#f4f4f4"><svg style="left:0;top:0" width="24" height="24" viewBox="0 0 24 24"><path d="M12 1L23 12L12 23L1 12Z" fill="#9cd030" stroke="#f08010" stroke-width="1.800"/><text x="5.500" y="16.500" font-size="12" fill="#f0a020" font-family="Liberation Sans,Noto Sans CJK SC,sans-serif">火</text></svg></div>
  <div class="rb" style="top:69px;border:none;background:#f4f4f4"><svg style="left:0;top:0" width="24" height="24" viewBox="0 0 24 24"><path d="M12 1L23 12L12 23L1 12Z" fill="#f8e020" stroke="#e03010" stroke-width="1.800"/><text x="6" y="16.500" font-size="12" font-weight="bold" fill="#2030c0" font-family="Liberation Sans,Noto Sans CJK SC,sans-serif">参</text></svg></div>
  <div class="rb" style="top:100px"><span>实透</span></div>
  <div class="rb" style="top:131px"><span>面透</span></div>
  <div class="rb" style="top:162px;background:#c8c8ff;border-color:#8a5a3a"><span>还原</span></div>
  <div class="rb" style="top:193px"><span>替换</span></div>
  <div class="vtxt">保留色</div>
  <div class="rb" style="top:267px;border:none;background:radial-gradient(circle at 35% 55%,#b0b0b0 0,#555 30%,#222 70%)"></div>
  <div class="rb" style="top:297px;border:none;background:#3a7a9a;color:#14206a;font-weight:bold"><span style="font-size:12px;letter-spacing:-.5px;left:0;font-family:'Liberation Serif','Noto Serif CJK SC',serif;transform:scaleY(1.500);transform-origin:50% 50%">截屏</span></div>
  <div class="rb" style="top:329px;border:none;background:#f4a040;color:#f8d0a0;font-size:10px;line-height:11px"><span style="font-size:10.500px;line-height:11px;top:1px">中文</span><span style="font-size:10.500px;line-height:11px;top:12px">图层</span></div>
  <div class="rb" style="top:359px;border:none;background:#f8a018;color:#703000;font-weight:bold"><span style="font-size:8px;line-height:10px;top:2px;letter-spacing:-.3px">隐藏线</span><span style="font-size:8px;line-height:10px;top:12px;letter-spacing:-.3px">变虚线</span></div>
  <div class="rb" style="top:389px;height:26px;border:1.200px solid #444;border-radius:13px;background:#e8e8e8;color:#333"><span style="font-size:8px;line-height:9px;top:3px">自动</span><span style="font-size:8px;line-height:9px;top:12px">装配</span></div>
  <i class="la" style="top:421px"></i>
  <div id="volw"><i></i></div>
</div>

<!-- bottombar -->
<div id="bbar">
  <div class="tb" style="left:0;top:0;width:1024px;height:23px"></div>
  <div class="abs" style="left:0;top:3px;width:1024px;height:30px">
  <i class="grip" style="left:212px;top:3px;height:16px"></i>
  <svg style="left:220px;top:4px" width="22" height="22" viewBox="0 0 22 22"><path d="M3 20L6 12H12L15 20Z" fill="#fff" stroke="#123" stroke-width="1.200"/><path d="M9 12L18 3" stroke="#f0a020" stroke-width="3"/><path d="M5 1l1.500 3l3 .500l-2.500 2l.500 3l-2.500 -1.500l-2.500 1.500l.500 -3l-2.500 -2l3 -.500z" fill="#f8e020" stroke="#c09010" stroke-width=".4"/></svg>
  <div class="abs" style="left:250px;top:4px;width:24px;height:20px;background:#8c979e;border:1px solid #a8b8c0"></div>
  <span class="tbt" style="left:277px;top:5px;color:#9a9a9a">完成草图</span>
  <svg style="left:330px;top:1px" width="500" height="22" viewBox="501 697 500 22" fill="none">
    <path d="M506 698V720M516 720V710C516 705 524 705 524 710V720" stroke="#111" stroke-width="1.600"/><circle cx="506" cy="711" r="1.600" fill="#e02010"/><circle cx="516" cy="711" r="1.600" fill="#e02010"/><circle cx="524" cy="711" r="1.600" fill="#e02010"/>
    <path d="M540 718L555 702" stroke="#111" stroke-width="1.300"/><circle cx="555" cy="702" r="1.800" fill="#e02010"/>
    <path d="M569 704C575 704 581 708 584 716" stroke="#4030a0" stroke-width="1.500"/><circle cx="569" cy="704" r="1.800" fill="#e02010"/><circle cx="580" cy="709" r="1.800" fill="#e02010"/>
    <circle cx="609" cy="712" r="10" stroke="#111" stroke-width="1.500"/>
    <path d="M629 701H638C645 701 649 706 649 716" stroke="#c89088" stroke-width="1.200"/><path d="M638 701H649V712" stroke="#999" stroke-width=".7" stroke-dasharray="1.500 1"/>
    <path d="M660 701H670L680 712V718" stroke="#c89088" stroke-width="1.200"/><path d="M670 701H680V712" stroke="#999" stroke-width=".7" stroke-dasharray="1.500 1"/>
    <path d="M692 720V704H712V720" stroke="#111" stroke-width="1.500"/><circle cx="692" cy="704" r="1.800" fill="#e02010"/>
    <path d="M724 710L730 702L736 712L742 709" stroke="#888" stroke-width="1"/><path d="M724 710C728 706 732 712 742 709" stroke="#111" stroke-width="1.200"/><circle cx="727" cy="708" r="1.600" fill="#e02010"/><circle cx="736" cy="712" r="1.600" fill="#e02010"/><circle cx="730" cy="702" r="1.400" fill="#777"/>
    <path d="M756 711H776M766 702V720" stroke="#111" stroke-width="1.500"/>
    <path d="M785 720V708C785 702 792 700 800 702L806 708L800 716" stroke="#888" stroke-width="1.300"/><path d="M789 720V710C789 706 794 705 798 706" stroke="#c89088" stroke-width="1.200"/>
  </svg>
  <i class="dd" style="left:647px;top:16px"></i>
  <i class="sep" style="left:655px;top:3px;height:20px"></i>
  <svg style="left:660px;top:4px" width="100" height="22" viewBox="831 697 100 22" fill="none" stroke="#999" stroke-width="1.100">
    <path d="M834 700L846 718H836"/><path d="M846 712L852 704L856 707L850 715Z" fill="#b8b0a0"/>
    <path d="M866 700L876 718H866"/><path d="M876 710L884 701L887 704L880 714Z" fill="#c8a080"/>
    <path d="M895 710H916M908 700V718" stroke="#b8a0a0"/><path d="M900 702L914 716" stroke="#d08070"/>
  </svg>
  <i class="sep" style="left:753px;top:3px;height:20px"></i>
  <svg style="left:761px;top:4px" width="26" height="22" viewBox="0 0 26 22" fill="none" stroke="#777" stroke-width="1.100"><path d="M2 2V10M22 2V10M2 6H22"/><path d="M2 6l4 -2v4zM22 6l-4 -2v4z" fill="#777"/><path d="M14 4L8 13H13L10 20" stroke="#888" stroke-width="1.600"/></svg>
  <i class="dd" style="left:791px;top:16px"></i>
  <i class="sep" style="left:803px;top:3px;height:20px"></i>
  <i class="sep" style="left:911px;top:3px;height:20px"></i>
  <div id="ime">
    <div class="abs" style="left:5px;top:3px;width:18px;height:18px;border-radius:4px;background:#f4600c"><i style="position:absolute;left:3px;top:4px;width:12px;height:2.500px;background:#fff"></i></div>
    <span class="abs" style="left:31px;top:3px;color:#1a78e0;font-size:15px;font-weight:bold;line-height:18px">中</span>
    <svg style="left:58px;top:5px" width="12" height="14" viewBox="0 0 12 14"><path d="M8 0C9 5 6 10 1 12C7 15 12 10 8 0Z" fill="#1a78e0"/></svg>
    <span class="abs" style="left:76px;top:1px;color:#1a78e0;font-size:15px;font-weight:bold;line-height:16px">°,</span>
    <div class="abs" style="left:96px;top:6px;width:16px;height:11px;border:2px solid #1a78e0;border-radius:2px;background:repeating-linear-gradient(90deg,transparent 0 2.500px,#1a78e0 2.500px 4px)"></div>
    <div class="abs" style="left:124px;top:6px;width:5px;height:5px;border-radius:3px;background:#ccc"></div>
    <span class="abs" style="left:140px;top:3px;color:#1a78e0;font-size:15px;font-weight:bold;line-height:18px">简</span>
    <svg style="left:162px;top:6px" width="16" height="12" viewBox="0 0 16 12"><path d="M0 3L5 0C7 2 9 2 11 0L16 3L14 7L12 6V12H4V6L2 7Z" fill="#1a78e0"/></svg>
    <svg style="left:185px;top:4px" width="16" height="16" viewBox="0 0 16 16"><circle cx="8" cy="8" r="5" fill="none" stroke="#1a78e0" stroke-width="3.400"/><path d="M8 0V16M0 8H16M2.300 2.300L13.700 13.700M13.700 2.300L2.300 13.700" stroke="#1a78e0" stroke-width="2.600"/><circle cx="8" cy="8" r="3" fill="#fafafa"/></svg>
  </div>
</div>
</div>

<!-- player -->
</div><!-- /win -->
<div id="player">
  <div id="ptrack"><div id="pfill"></div><div id="vfill"></div></div>
  <svg style="left:0;top:0" width="1366" height="53" viewBox="0 715 1366 53">
    <circle cx="1235.500" cy="724.500" r="4.600" fill="#4aa8ff" stroke="#fff" stroke-width="2.200"/>
    <path d="M1262 722h3l4 -3v11l-4 -3h-3z" fill="#8a8e9c"/><path d="M1271 720c3 2 3 7 0 9M1274 718c4 3 4 10 0 13" fill="none" stroke="#8a8e9c" stroke-width="1"/>
    <circle cx="1342" cy="724.500" r="4" fill="#4aa8ff" stroke="#fff" stroke-width="2"/>
    <path d="M12 741.500L23 748.500L12 755.500Z" fill="#f0f0f0"/>
    <rect x="33.500" y="745" width="8.500" height="8.500" fill="#f0f0f0"/>
    <path d="M52 744.500h2.500v9H52zM62 744.500L54.500 749L62 753.500Z" fill="#f0f0f0"/>
    <path d="M79 744.500h2.500v9H79zM71 744.500L78.500 749L71 753.500Z" fill="#f0f0f0"/>
    <path d="M90 750.500L95 744.500L100 750.500ZM90 752h10v2H90z" fill="#f0f0f0"/>
    <path d="M1356 767L1366 757M1360 767L1366 761" stroke="#8a8e9a" stroke-width="1"/>
  </svg>
  <span id="ptime">00:56:47<i> / 00:57:11</i></span>
  <div id="wm">
    <svg style="left:0;top:0" width="129" height="40" viewBox="0 0 129 40">
      <defs><linearGradient id="wmg" x1="0" y1="1" x2="1" y2="0"><stop offset="0" stop-color="#2a6ab8"/><stop offset=".55" stop-color="#d05030"/><stop offset="1" stop-color="#e8a030"/></linearGradient></defs>
      <path d="M3 28C-1 16 21 1 43 2C58 3 61 16 48 27C35 37 8 40 3 28ZM8 27C12 34 32 31 43 23C53 16 52 8 41 7C26 6 5 17 8 27Z" fill="url(#wmg)"/>
      <circle cx="22" cy="6.500" r="2.200" fill="#2a4a9a"/>
      <text x="13" y="29" font-size="20" font-style="italic" fill="#2a4a9a" font-family="Liberation Serif,serif">X</text>
      <text x="28" y="29" font-size="20" font-style="italic" fill="#d86030" font-family="Liberation Serif,serif">S</text>
      <text x="57" y="23" font-size="23" font-weight="bold" fill="#2a3158" font-family="Liberation Sans,Noto Sans CJK SC,sans-serif" textLength="68" lengthAdjust="spacingAndGlyphs">资料网</text>
      <text x="57" y="34" font-size="8.500" font-weight="bold" fill="#2a3158" font-family="Liberation Mono,monospace" textLength="68" lengthAdjust="spacingAndGlyphs">ZL.XS1616.COM</text>
    </svg>
  </div>
</div>

</body></html>
